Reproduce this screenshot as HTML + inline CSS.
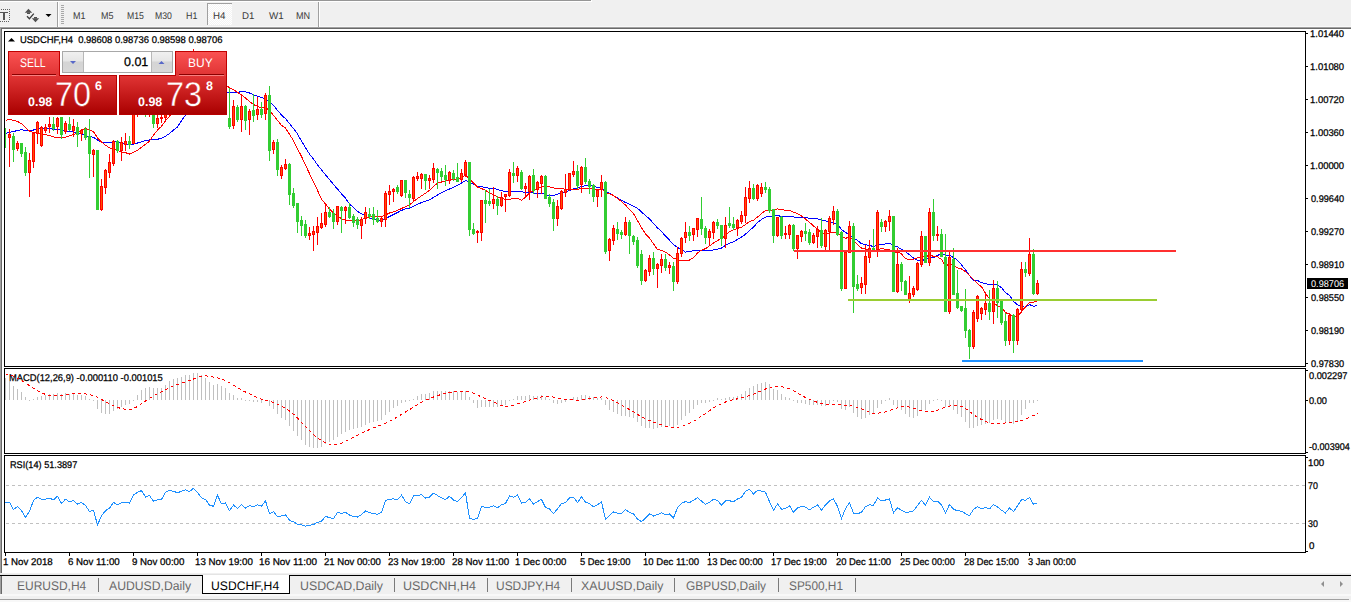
<!DOCTYPE html><html><head><meta charset="utf-8"><style>
html,body{margin:0;padding:0;}body{width:1351px;height:602px;overflow:hidden;background:#f0f0f0;position:relative;}
svg{position:absolute;left:0;top:0;}text{font-family:"Liberation Sans",sans-serif;}
</style></head><body>
<svg width="1351" height="602" viewBox="0 0 1351 602">
<defs>
<linearGradient id="gtab" gradientUnits="userSpaceOnUse" x1="0" y1="52" x2="0" y2="75"><stop offset="0" stop-color="#fa5252"/><stop offset="1" stop-color="#e03434"/></linearGradient>
<linearGradient id="gbig" gradientUnits="userSpaceOnUse" x1="0" y1="76" x2="0" y2="114"><stop offset="0" stop-color="#e03434"/><stop offset="1" stop-color="#aa0000"/></linearGradient>
<linearGradient id="gbigu" gradientUnits="userSpaceOnUse" x1="0" y1="76" x2="0" y2="114"><stop offset="0" stop-color="#e03434"/><stop offset="1" stop-color="#aa0000"/></linearGradient>
<linearGradient id="gbtn" gradientUnits="objectBoundingBox" x1="0" y1="0" x2="0" y2="1"><stop offset="0" stop-color="#f0f0f0"/><stop offset="0.45" stop-color="#e6e6e6"/><stop offset="0.5" stop-color="#d4d4d4"/><stop offset="1" stop-color="#d8d8d8"/></linearGradient>
<pattern id="dots" width="2" height="2" patternUnits="userSpaceOnUse"><rect width="2" height="2" fill="#f4f4f4"/><rect width="1" height="1" fill="#ffffff"/><rect x="1" y="1" width="1" height="1" fill="#ffffff"/></pattern>
<clipPath id="cm"><rect x="5" y="32" width="1300" height="334"/></clipPath>
<clipPath id="cmacd"><rect x="5" y="369" width="1300" height="84"/></clipPath>
<clipPath id="crsi"><rect x="5" y="456" width="1300" height="96"/></clipPath>
</defs>
<g shape-rendering="crispEdges">
<rect x="0" y="0" width="1351" height="602" fill="#f0f0f0"/>
<rect x="0" y="0" width="591" height="1" fill="#969696"/><rect x="0" y="1" width="592" height="1" fill="#ffffff"/><rect x="591" y="0" width="1" height="2" fill="#ffffff"/>
<rect x="0" y="26" width="1351" height="1" fill="#f8f8f8"/><rect x="0" y="27" width="1351" height="1" fill="#a0a0a0"/><rect x="0" y="28" width="1351" height="1" fill="#696969"/>
<g fill="#606060">
<rect x="9" y="9" width="1" height="1"/>
<rect x="9" y="11" width="1" height="1"/>
<rect x="9" y="13" width="1" height="1"/>
<rect x="9" y="15" width="1" height="1"/>
<rect x="9" y="17" width="1" height="1"/>
<rect x="9" y="19" width="1" height="1"/>
<rect x="1" y="9" width="1" height="1"/>
<rect x="3" y="9" width="1" height="1"/>
<rect x="5" y="9" width="1" height="1"/>
<rect x="7" y="9" width="1" height="1"/>
<rect x="9" y="9" width="1" height="1"/>
<rect x="0" y="21" width="1" height="1"/>
<rect x="2" y="21" width="1" height="1"/>
<rect x="4" y="21" width="1" height="1"/>
<rect x="6" y="21" width="1" height="1"/>
<rect x="8" y="21" width="1" height="1"/>
</g><g fill="#555555"><rect x="0" y="12" width="8" height="1"/><rect x="3" y="12" width="2" height="8"/></g>
</g>
<path d="M24.8 12.8 L28.5 8.8 L32.2 12.8 Z" fill="#505050"/><rect x="27" y="12.5" width="3" height="1.5" fill="#505050"/><rect x="34" y="17" width="3" height="1.5" fill="#505050"/><path d="M31.8 18.3 L39.2 18.3 L35.5 22.2 Z" fill="#505050"/><path d="M27 16.3 L29.4 18.7 L33.8 13.6" stroke="#3a3a3a" stroke-width="1.3" fill="none"/>
<path d="M45.5 14 L51.5 14 L48.5 17 Z" fill="#000"/>
<g shape-rendering="crispEdges">
<rect x="57" y="2" width="1" height="25" fill="#a0a0a0"/><rect x="58" y="2" width="1" height="25" fill="#ffffff"/>
<rect x="61" y="5" width="3" height="1" fill="#a8a8a8"/>
<rect x="61" y="7" width="3" height="1" fill="#a8a8a8"/>
<rect x="61" y="9" width="3" height="1" fill="#a8a8a8"/>
<rect x="61" y="11" width="3" height="1" fill="#a8a8a8"/>
<rect x="61" y="13" width="3" height="1" fill="#a8a8a8"/>
<rect x="61" y="15" width="3" height="1" fill="#a8a8a8"/>
<rect x="61" y="17" width="3" height="1" fill="#a8a8a8"/>
<rect x="61" y="19" width="3" height="1" fill="#a8a8a8"/>
<rect x="61" y="21" width="3" height="1" fill="#a8a8a8"/>
<rect x="61" y="23" width="3" height="1" fill="#a8a8a8"/>
<rect x="318" y="2" width="1" height="25" fill="#a0a0a0"/><rect x="319" y="2" width="1" height="25" fill="#ffffff"/>
<rect x="207" y="3" width="25" height="22" fill="url(#dots)"/><rect x="207" y="3" width="25" height="1" fill="#a0a0a0"/><rect x="207" y="3" width="1" height="22" fill="#a0a0a0"/>
</g>
<text x="73.00" y="19.00" font-size="9.72" textLength="12.48" lengthAdjust="spacingAndGlyphs" text-rendering="geometricPrecision" fill="#3a3a3a">M1</text>
<text x="101.00" y="19.00" font-size="9.72" textLength="12.48" lengthAdjust="spacingAndGlyphs" text-rendering="geometricPrecision" fill="#3a3a3a">M5</text>
<text x="127.00" y="19.00" font-size="9.72" textLength="16.92" lengthAdjust="spacingAndGlyphs" text-rendering="geometricPrecision" fill="#3a3a3a">M15</text>
<text x="155.00" y="19.00" font-size="9.72" textLength="16.92" lengthAdjust="spacingAndGlyphs" text-rendering="geometricPrecision" fill="#3a3a3a">M30</text>
<text x="186.00" y="19.00" font-size="9.72" textLength="11.40" lengthAdjust="spacingAndGlyphs" text-rendering="geometricPrecision" fill="#3a3a3a">H1</text>
<text x="213.00" y="19.00" font-size="9.72" textLength="12.44" lengthAdjust="spacingAndGlyphs" text-rendering="geometricPrecision" fill="#3a3a3a">H4</text>
<text x="242.00" y="19.00" font-size="9.72" textLength="12.44" lengthAdjust="spacingAndGlyphs" text-rendering="geometricPrecision" fill="#3a3a3a">D1</text>
<text x="269.00" y="19.00" font-size="9.72" textLength="14.73" lengthAdjust="spacingAndGlyphs" text-rendering="geometricPrecision" fill="#3a3a3a">W1</text>
<text x="296.00" y="19.00" font-size="9.72" textLength="14.12" lengthAdjust="spacingAndGlyphs" text-rendering="geometricPrecision" fill="#3a3a3a">MN</text>
<g shape-rendering="crispEdges">
<rect x="0" y="29" width="1351" height="544" fill="#ffffff"/>
<rect x="0" y="27" width="1" height="546" fill="#a0a0a0"/><rect x="1" y="28" width="1" height="545" fill="#696969"/>
<g fill="#000">
<rect x="4" y="31" width="1302" height="1"/><rect x="4" y="366" width="1302" height="1"/><rect x="4" y="31" width="1" height="336"/><rect x="1305" y="31" width="1" height="336"/>
<rect x="4" y="368" width="1302" height="1"/><rect x="4" y="453" width="1302" height="1"/><rect x="4" y="368" width="1" height="86"/><rect x="1305" y="368" width="1" height="86"/>
<rect x="4" y="455" width="1302" height="1"/><rect x="4" y="552" width="1302" height="1"/><rect x="4" y="455" width="1" height="98"/><rect x="1305" y="455" width="1" height="98"/>
<rect x="1306" y="33" width="2" height="1"/>
<rect x="1306" y="66" width="2" height="1"/>
<rect x="1306" y="99" width="2" height="1"/>
<rect x="1306" y="132" width="2" height="1"/>
<rect x="1306" y="165" width="2" height="1"/>
<rect x="1306" y="198" width="2" height="1"/>
<rect x="1306" y="231" width="2" height="1"/>
<rect x="1306" y="264" width="2" height="1"/>
<rect x="1306" y="297" width="2" height="1"/>
<rect x="1306" y="330" width="2" height="1"/>
<rect x="1306" y="363" width="2" height="1"/>
<rect x="1306" y="370" width="2" height="1"/><rect x="1306" y="400" width="2" height="1"/><rect x="1306" y="452" width="2" height="1"/><rect x="1306" y="457" width="2" height="1"/><rect x="1306" y="551" width="2" height="1"/>
<rect x="5" y="553" width="1" height="3"/>
<rect x="69" y="553" width="1" height="3"/>
<rect x="133" y="553" width="1" height="3"/>
<rect x="197" y="553" width="1" height="3"/>
<rect x="261" y="553" width="1" height="3"/>
<rect x="325" y="553" width="1" height="3"/>
<rect x="389" y="553" width="1" height="3"/>
<rect x="453" y="553" width="1" height="3"/>
<rect x="517" y="553" width="1" height="3"/>
<rect x="581" y="553" width="1" height="3"/>
<rect x="645" y="553" width="1" height="3"/>
<rect x="709" y="553" width="1" height="3"/>
<rect x="773" y="553" width="1" height="3"/>
<rect x="837" y="553" width="1" height="3"/>
<rect x="901" y="553" width="1" height="3"/>
<rect x="965" y="553" width="1" height="3"/>
<rect x="1029" y="553" width="1" height="3"/>
</g></g>
<text x="1310.03" y="37.00" font-size="9.72" textLength="34.11" lengthAdjust="spacingAndGlyphs" text-rendering="geometricPrecision" fill="#000" stroke="#000" stroke-width="0.25">1.01440</text>
<text x="1310.03" y="70.00" font-size="9.72" textLength="34.11" lengthAdjust="spacingAndGlyphs" text-rendering="geometricPrecision" fill="#000" stroke="#000" stroke-width="0.25">1.01080</text>
<text x="1310.03" y="103.00" font-size="9.72" textLength="34.11" lengthAdjust="spacingAndGlyphs" text-rendering="geometricPrecision" fill="#000" stroke="#000" stroke-width="0.25">1.00720</text>
<text x="1310.03" y="136.00" font-size="9.72" textLength="34.11" lengthAdjust="spacingAndGlyphs" text-rendering="geometricPrecision" fill="#000" stroke="#000" stroke-width="0.25">1.00360</text>
<text x="1310.03" y="169.00" font-size="9.72" textLength="34.11" lengthAdjust="spacingAndGlyphs" text-rendering="geometricPrecision" fill="#000" stroke="#000" stroke-width="0.25">1.00000</text>
<text x="1311.00" y="202.00" font-size="9.72" textLength="33.13" lengthAdjust="spacingAndGlyphs" text-rendering="geometricPrecision" fill="#000" stroke="#000" stroke-width="0.25">0.99640</text>
<text x="1311.00" y="235.00" font-size="9.72" textLength="33.13" lengthAdjust="spacingAndGlyphs" text-rendering="geometricPrecision" fill="#000" stroke="#000" stroke-width="0.25">0.99270</text>
<text x="1311.00" y="268.00" font-size="9.72" textLength="33.13" lengthAdjust="spacingAndGlyphs" text-rendering="geometricPrecision" fill="#000" stroke="#000" stroke-width="0.25">0.98910</text>
<text x="1311.00" y="301.00" font-size="9.72" textLength="33.13" lengthAdjust="spacingAndGlyphs" text-rendering="geometricPrecision" fill="#000" stroke="#000" stroke-width="0.25">0.98550</text>
<text x="1311.00" y="334.00" font-size="9.72" textLength="33.13" lengthAdjust="spacingAndGlyphs" text-rendering="geometricPrecision" fill="#000" stroke="#000" stroke-width="0.25">0.98190</text>
<text x="1311.00" y="367.00" font-size="9.72" textLength="33.13" lengthAdjust="spacingAndGlyphs" text-rendering="geometricPrecision" fill="#000" stroke="#000" stroke-width="0.25">0.97830</text>
<text x="1309.00" y="379.00" font-size="9.72" textLength="38.52" lengthAdjust="spacingAndGlyphs" text-rendering="geometricPrecision" fill="#000" stroke="#000" stroke-width="0.25">0.002297</text>
<text x="1309.00" y="404.00" font-size="9.72" textLength="17.93" lengthAdjust="spacingAndGlyphs" text-rendering="geometricPrecision" fill="#000" stroke="#000" stroke-width="0.25">0.00</text>
<text x="1309.00" y="450.00" font-size="9.72" textLength="40.80" lengthAdjust="spacingAndGlyphs" text-rendering="geometricPrecision" fill="#000" stroke="#000" stroke-width="0.25">-0.003904</text>
<text x="1308.00" y="466.00" font-size="9.72" textLength="16.22" lengthAdjust="spacingAndGlyphs" text-rendering="geometricPrecision" fill="#000" stroke="#000" stroke-width="0.25">100</text>
<text x="1308.00" y="489.00" font-size="9.72" textLength="9.83" lengthAdjust="spacingAndGlyphs" text-rendering="geometricPrecision" fill="#000" stroke="#000" stroke-width="0.25">70</text>
<text x="1308.00" y="527.00" font-size="9.72" textLength="9.83" lengthAdjust="spacingAndGlyphs" text-rendering="geometricPrecision" fill="#000" stroke="#000" stroke-width="0.25">30</text>
<text x="1309.00" y="549.00" font-size="9.72" textLength="5.41" lengthAdjust="spacingAndGlyphs" text-rendering="geometricPrecision" fill="#000" stroke="#000" stroke-width="0.25">0</text>
<text x="3.00" y="565.00" font-size="9.72" textLength="49.72" lengthAdjust="spacingAndGlyphs" text-rendering="geometricPrecision" fill="#000" stroke="#000" stroke-width="0.25">1 Nov 2018</text>
<text x="68.00" y="565.00" font-size="9.72" textLength="51.70" lengthAdjust="spacingAndGlyphs" text-rendering="geometricPrecision" fill="#000" stroke="#000" stroke-width="0.25">6 Nov 11:00</text>
<text x="132.00" y="565.00" font-size="9.72" textLength="52.42" lengthAdjust="spacingAndGlyphs" text-rendering="geometricPrecision" fill="#000" stroke="#000" stroke-width="0.25">9 Nov 00:00</text>
<text x="195.00" y="565.00" font-size="9.72" textLength="57.83" lengthAdjust="spacingAndGlyphs" text-rendering="geometricPrecision" fill="#000" stroke="#000" stroke-width="0.25">13 Nov 19:00</text>
<text x="258.98" y="565.00" font-size="9.72" textLength="58.11" lengthAdjust="spacingAndGlyphs" text-rendering="geometricPrecision" fill="#000" stroke="#000" stroke-width="0.25">16 Nov 11:00</text>
<text x="324.00" y="565.00" font-size="9.72" textLength="56.83" lengthAdjust="spacingAndGlyphs" text-rendering="geometricPrecision" fill="#000" stroke="#000" stroke-width="0.25">21 Nov 00:00</text>
<text x="388.00" y="565.00" font-size="9.72" textLength="56.83" lengthAdjust="spacingAndGlyphs" text-rendering="geometricPrecision" fill="#000" stroke="#000" stroke-width="0.25">23 Nov 19:00</text>
<text x="452.00" y="565.00" font-size="9.72" textLength="57.09" lengthAdjust="spacingAndGlyphs" text-rendering="geometricPrecision" fill="#000" stroke="#000" stroke-width="0.25">28 Nov 11:00</text>
<text x="515.02" y="565.00" font-size="9.72" textLength="51.39" lengthAdjust="spacingAndGlyphs" text-rendering="geometricPrecision" fill="#000" stroke="#000" stroke-width="0.25">1 Dec 00:00</text>
<text x="580.00" y="565.00" font-size="9.72" textLength="50.41" lengthAdjust="spacingAndGlyphs" text-rendering="geometricPrecision" fill="#000" stroke="#000" stroke-width="0.25">5 Dec 19:00</text>
<text x="643.02" y="565.00" font-size="9.72" textLength="56.07" lengthAdjust="spacingAndGlyphs" text-rendering="geometricPrecision" fill="#000" stroke="#000" stroke-width="0.25">10 Dec 11:00</text>
<text x="707.04" y="565.00" font-size="9.72" textLength="55.80" lengthAdjust="spacingAndGlyphs" text-rendering="geometricPrecision" fill="#000" stroke="#000" stroke-width="0.25">13 Dec 00:00</text>
<text x="771.04" y="565.00" font-size="9.72" textLength="55.80" lengthAdjust="spacingAndGlyphs" text-rendering="geometricPrecision" fill="#000" stroke="#000" stroke-width="0.25">17 Dec 19:00</text>
<text x="836.00" y="565.00" font-size="9.72" textLength="55.09" lengthAdjust="spacingAndGlyphs" text-rendering="geometricPrecision" fill="#000" stroke="#000" stroke-width="0.25">20 Dec 11:00</text>
<text x="900.00" y="565.00" font-size="9.72" textLength="54.84" lengthAdjust="spacingAndGlyphs" text-rendering="geometricPrecision" fill="#000" stroke="#000" stroke-width="0.25">25 Dec 00:00</text>
<text x="964.00" y="565.00" font-size="9.72" textLength="54.84" lengthAdjust="spacingAndGlyphs" text-rendering="geometricPrecision" fill="#000" stroke="#000" stroke-width="0.25">28 Dec 15:00</text>
<text x="1028.00" y="565.00" font-size="9.72" textLength="47.81" lengthAdjust="spacingAndGlyphs" text-rendering="geometricPrecision" fill="#000" stroke="#000" stroke-width="0.25">3 Jan 00:00</text>
<g clip-path="url(#cm)">
<polyline points="5.5,133.4 9.5,132.4 13.5,131.6 17.5,130.4 21.5,129.8 25.5,130.4 29.5,130.8 33.5,130.0 37.5,129.0 41.5,128.5 45.5,128.5 49.5,128.7 53.5,129.2 57.5,129.4 61.5,130.5 65.5,131.0 69.5,131.7 73.5,132.0 77.5,132.9 81.5,134.0 85.5,135.6 89.5,136.5 93.5,137.3 97.5,140.1 101.5,142.2 105.5,143.0 109.5,142.5 113.5,141.6 117.5,142.4 121.5,143.4 125.5,144.0 129.5,144.8 133.5,144.3 137.5,143.0 141.5,141.8 145.5,140.7 149.5,139.9 153.5,139.6 157.5,139.2 161.5,138.4 165.5,136.3 169.5,133.5 173.5,130.0 177.5,126.9 181.5,120.6 185.5,115.2 189.5,110.7 193.5,105.9 197.5,102.6 201.5,99.5 205.5,97.0 209.5,95.3 213.5,93.6 217.5,91.7 221.5,91.6 225.5,91.7 229.5,92.4 233.5,92.5 237.5,92.3 241.5,91.7 245.5,91.9 249.5,93.0 253.5,94.8 257.5,96.2 261.5,97.6 265.5,98.5 269.5,102.2 273.5,105.3 277.5,110.4 281.5,115.0 285.5,118.7 289.5,123.7 293.5,128.5 297.5,133.9 301.5,141.2 305.5,147.6 309.5,154.1 313.5,159.1 317.5,164.8 321.5,169.8 325.5,174.8 329.5,179.4 333.5,184.6 337.5,189.0 341.5,193.8 345.5,198.2 349.5,204.0 353.5,207.5 357.5,211.4 361.5,213.7 365.5,215.9 369.5,218.4 373.5,219.5 377.5,220.3 381.5,220.2 385.5,218.6 389.5,216.5 393.5,214.5 397.5,212.5 401.5,210.4 405.5,208.9 409.5,208.2 413.5,206.3 417.5,204.2 421.5,202.6 425.5,201.2 429.5,199.8 433.5,197.5 437.5,195.1 441.5,192.8 445.5,190.9 449.5,189.0 453.5,187.2 457.5,185.4 461.5,183.1 465.5,180.5 469.5,182.2 473.5,184.2 477.5,186.2 481.5,186.6 485.5,187.7 489.5,188.2 493.5,188.3 497.5,189.6 501.5,190.6 505.5,191.6 509.5,191.2 513.5,191.1 517.5,191.1 521.5,191.8 525.5,192.3 529.5,192.2 533.5,193.0 537.5,193.2 541.5,193.0 545.5,194.2 549.5,196.1 553.5,195.6 557.5,194.3 561.5,192.4 565.5,191.9 569.5,190.5 573.5,188.9 577.5,188.3 581.5,186.5 585.5,185.7 589.5,185.3 593.5,186.5 597.5,187.2 601.5,187.8 605.5,190.8 609.5,193.4 613.5,195.8 617.5,197.9 621.5,200.4 625.5,202.5 629.5,204.3 633.5,206.1 637.5,208.4 641.5,211.9 645.5,215.6 649.5,218.9 653.5,223.5 657.5,227.9 661.5,231.4 665.5,236.2 669.5,240.2 673.5,244.7 677.5,247.4 681.5,249.7 685.5,252.1 689.5,251.3 693.5,250.8 697.5,250.3 701.5,250.1 705.5,250.2 709.5,250.6 713.5,250.0 717.5,249.3 721.5,248.0 725.5,245.4 729.5,243.2 733.5,241.7 737.5,239.5 741.5,237.1 745.5,234.2 749.5,230.4 753.5,227.2 757.5,222.6 761.5,219.5 765.5,217.2 769.5,216.1 773.5,216.1 777.5,215.6 781.5,216.4 785.5,216.6 789.5,216.1 793.5,216.9 797.5,217.5 801.5,217.8 805.5,217.5 809.5,218.4 813.5,218.8 817.5,218.9 821.5,220.1 825.5,220.8 829.5,221.8 833.5,222.9 837.5,224.6 841.5,229.5 845.5,232.6 849.5,234.4 853.5,238.0 857.5,240.5 861.5,243.7 865.5,244.7 869.5,245.4 873.5,246.6 877.5,244.9 881.5,244.5 885.5,244.0 889.5,243.2 893.5,245.5 897.5,246.9 901.5,249.4 905.5,251.7 909.5,254.7 913.5,258.0 917.5,260.5 921.5,260.6 925.5,259.4 929.5,257.5 933.5,257.9 937.5,255.4 941.5,253.9 945.5,255.2 949.5,255.3 953.5,257.5 957.5,260.2 961.5,264.8 965.5,269.8 969.5,275.7 973.5,280.3 977.5,280.5 981.5,282.6 985.5,283.7 989.5,284.5 993.5,284.3 997.5,284.9 1001.5,287.7 1005.5,292.7 1009.5,295.2 1013.5,301.3 1017.5,304.8 1021.5,306.5 1025.5,307.3 1029.5,304.5 1033.5,306.3 1037.5,305.7" fill="none" stroke="#0000ff" stroke-width="1" shape-rendering="crispEdges"/>
<polyline points="5.5,120.2 9.5,119.5 13.5,120.4 17.5,121.5 21.5,123.8 25.5,127.8 29.5,131.1 33.5,132.7 37.5,133.3 41.5,134.2 45.5,134.8 49.5,135.5 53.5,136.9 57.5,138.0 61.5,137.9 65.5,137.1 69.5,135.7 73.5,134.5 77.5,133.1 81.5,130.1 85.5,128.5 89.5,129.9 93.5,131.9 97.5,137.8 101.5,142.0 105.5,145.3 109.5,147.7 113.5,149.4 117.5,150.5 121.5,151.9 125.5,152.7 129.5,154.0 133.5,152.4 137.5,150.4 141.5,147.2 145.5,144.3 149.5,141.1 153.5,135.0 157.5,130.1 161.5,126.3 165.5,120.9 169.5,116.3 173.5,111.3 177.5,107.2 181.5,102.7 185.5,97.5 189.5,94.9 193.5,92.2 197.5,90.6 201.5,88.7 205.5,87.6 209.5,86.2 213.5,85.6 217.5,82.3 221.5,83.3 225.5,84.6 229.5,87.9 233.5,89.5 237.5,92.4 241.5,94.9 245.5,98.0 249.5,101.5 253.5,104.6 257.5,106.3 261.5,108.1 265.5,107.4 269.5,110.4 273.5,115.4 277.5,120.4 281.5,125.4 285.5,128.1 289.5,134.4 293.5,140.6 297.5,148.8 301.5,156.3 305.5,165.1 309.5,173.6 313.5,182.3 317.5,190.3 321.5,199.4 325.5,203.9 329.5,209.1 333.5,212.9 337.5,215.6 341.5,218.9 345.5,219.9 349.5,220.7 353.5,220.8 357.5,220.7 361.5,219.6 365.5,218.1 369.5,217.0 373.5,216.5 377.5,216.4 381.5,216.8 385.5,215.1 389.5,213.0 393.5,211.8 397.5,210.4 401.5,208.5 405.5,206.7 409.5,204.9 413.5,201.6 417.5,198.5 421.5,195.8 425.5,193.2 429.5,190.3 433.5,186.5 437.5,183.2 441.5,182.0 445.5,181.1 449.5,179.9 453.5,179.0 457.5,179.1 461.5,177.7 465.5,175.2 469.5,178.9 473.5,183.0 477.5,187.1 481.5,188.5 485.5,190.3 489.5,192.8 493.5,194.7 497.5,196.8 501.5,198.1 505.5,199.6 509.5,199.2 513.5,198.8 517.5,198.4 521.5,200.3 525.5,197.2 529.5,193.1 533.5,190.2 537.5,188.9 541.5,187.0 545.5,186.6 549.5,186.9 553.5,187.9 557.5,188.5 561.5,188.3 565.5,189.5 569.5,189.4 573.5,189.6 577.5,189.4 581.5,188.0 585.5,188.4 589.5,188.1 593.5,189.1 597.5,190.1 601.5,188.9 605.5,192.4 609.5,193.9 613.5,195.4 617.5,198.4 621.5,201.6 625.5,205.1 629.5,209.7 633.5,213.7 637.5,220.7 641.5,227.8 645.5,233.8 649.5,238.2 653.5,243.8 657.5,249.6 661.5,250.2 665.5,252.2 669.5,254.9 673.5,258.3 677.5,259.6 681.5,260.8 685.5,260.6 689.5,260.1 693.5,257.5 697.5,253.1 701.5,250.1 705.5,248.6 709.5,245.9 713.5,242.9 717.5,240.5 721.5,238.4 725.5,235.6 729.5,231.6 733.5,229.7 737.5,228.4 741.5,227.2 745.5,224.5 749.5,221.6 753.5,220.2 757.5,217.1 761.5,213.6 765.5,210.6 769.5,209.7 773.5,210.4 777.5,208.9 781.5,209.6 785.5,210.2 789.5,210.1 793.5,212.1 797.5,213.5 801.5,215.9 805.5,219.1 809.5,222.3 813.5,225.9 817.5,228.9 821.5,232.9 825.5,234.3 829.5,233.1 833.5,232.6 837.5,232.6 841.5,236.5 845.5,238.4 849.5,236.9 853.5,240.5 857.5,244.6 861.5,248.1 865.5,249.1 869.5,250.1 873.5,251.6 877.5,249.2 881.5,248.9 885.5,249.1 889.5,249.5 893.5,253.6 897.5,251.9 901.5,253.9 905.5,258.8 909.5,259.3 913.5,259.3 917.5,257.9 921.5,256.4 925.5,257.4 929.5,254.7 933.5,256.4 937.5,256.9 941.5,259.4 945.5,266.2 949.5,263.8 953.5,265.9 957.5,267.8 961.5,268.9 965.5,271.6 969.5,275.7 973.5,279.2 977.5,283.5 981.5,286.8 985.5,293.3 989.5,298.7 993.5,302.6 997.5,305.9 1001.5,306.6 1005.5,312.6 1009.5,314.1 1013.5,316.4 1017.5,316.4 1021.5,312.0 1025.5,306.7 1029.5,302.6 1033.5,302.4 1037.5,300.6" fill="none" stroke="#ff0000" stroke-width="1" shape-rendering="crispEdges"/>
</g>
<g clip-path="url(#cm)" shape-rendering="crispEdges">
<rect x="5" y="128" width="1" height="20" fill="#32cd32"/>
<rect x="9" y="129" width="1" height="38" fill="#ff0000"/><rect x="8" y="134" width="3" height="4" fill="#ff0000"/>
<rect x="9" y="135" width="1" height="2" fill="#ff5000"/>
<rect x="13" y="133" width="1" height="29" fill="#32cd32"/><rect x="12" y="136" width="3" height="14" fill="#32cd32"/>
<rect x="17" y="141" width="1" height="10" fill="#ff0000"/><rect x="16" y="143" width="3" height="6" fill="#ff0000"/>
<rect x="17" y="144" width="1" height="4" fill="#ff5000"/>
<rect x="21" y="143" width="1" height="14" fill="#32cd32"/><rect x="20" y="143" width="3" height="11" fill="#32cd32"/>
<rect x="25" y="147" width="1" height="29" fill="#32cd32"/><rect x="24" y="152" width="3" height="21" fill="#32cd32"/>
<rect x="29" y="153" width="1" height="44" fill="#ff0000"/><rect x="28" y="160" width="3" height="13" fill="#ff0000"/>
<rect x="29" y="161" width="1" height="11" fill="#ff5000"/>
<rect x="33" y="132" width="1" height="36" fill="#ff0000"/><rect x="32" y="133" width="3" height="29" fill="#ff0000"/>
<rect x="33" y="134" width="1" height="27" fill="#ff5000"/>
<rect x="37" y="121" width="1" height="23" fill="#ff0000"/><rect x="36" y="122" width="3" height="12" fill="#ff0000"/>
<rect x="37" y="123" width="1" height="10" fill="#ff5000"/>
<rect x="41" y="126" width="1" height="21" fill="#ff0000"/><rect x="40" y="127" width="3" height="19" fill="#ff0000"/>
<rect x="41" y="128" width="1" height="17" fill="#ff5000"/>
<rect x="45" y="124" width="1" height="9" fill="#ff0000"/><rect x="44" y="127" width="3" height="4" fill="#ff0000"/>
<rect x="45" y="128" width="1" height="2" fill="#ff5000"/>
<rect x="49" y="117" width="1" height="16" fill="#ff0000"/><rect x="48" y="124" width="3" height="3" fill="#ff0000"/>
<rect x="49" y="125" width="1" height="1" fill="#ff5000"/>
<rect x="53" y="117" width="1" height="14" fill="#32cd32"/><rect x="52" y="124" width="3" height="5" fill="#32cd32"/>
<rect x="57" y="117" width="1" height="17" fill="#ff0000"/><rect x="56" y="118" width="3" height="9" fill="#ff0000"/>
<rect x="57" y="119" width="1" height="7" fill="#ff5000"/>
<rect x="61" y="117" width="1" height="22" fill="#32cd32"/><rect x="60" y="117" width="3" height="18" fill="#32cd32"/>
<rect x="65" y="121" width="1" height="13" fill="#ff0000"/><rect x="64" y="123" width="3" height="9" fill="#ff0000"/>
<rect x="65" y="124" width="1" height="7" fill="#ff5000"/>
<rect x="69" y="117" width="1" height="14" fill="#32cd32"/><rect x="68" y="124" width="3" height="6" fill="#32cd32"/>
<rect x="73" y="119" width="1" height="18" fill="#ff0000"/><rect x="72" y="126" width="3" height="5" fill="#ff0000"/>
<rect x="73" y="127" width="1" height="3" fill="#ff5000"/>
<rect x="77" y="122" width="1" height="25" fill="#32cd32"/><rect x="76" y="127" width="3" height="8" fill="#32cd32"/>
<rect x="81" y="129" width="1" height="12" fill="#ff0000"/><rect x="80" y="130" width="3" height="4" fill="#ff0000"/>
<rect x="81" y="131" width="1" height="2" fill="#ff5000"/>
<rect x="85" y="127" width="1" height="13" fill="#32cd32"/><rect x="84" y="129" width="3" height="9" fill="#32cd32"/>
<rect x="89" y="119" width="1" height="59" fill="#32cd32"/><rect x="88" y="136" width="3" height="18" fill="#32cd32"/>
<rect x="93" y="149" width="1" height="28" fill="#ff0000"/><rect x="92" y="150" width="3" height="5" fill="#ff0000"/>
<rect x="93" y="151" width="1" height="3" fill="#ff5000"/>
<rect x="97" y="150" width="1" height="60" fill="#32cd32"/><rect x="96" y="150" width="3" height="60" fill="#32cd32"/>
<rect x="101" y="179" width="1" height="32" fill="#ff0000"/><rect x="100" y="186" width="3" height="24" fill="#ff0000"/>
<rect x="101" y="187" width="1" height="22" fill="#ff5000"/>
<rect x="105" y="169" width="1" height="25" fill="#ff0000"/><rect x="104" y="170" width="3" height="18" fill="#ff0000"/>
<rect x="105" y="171" width="1" height="16" fill="#ff5000"/>
<rect x="109" y="154" width="1" height="24" fill="#ff0000"/><rect x="108" y="162" width="3" height="11" fill="#ff0000"/>
<rect x="109" y="163" width="1" height="9" fill="#ff5000"/>
<rect x="113" y="140" width="1" height="26" fill="#ff0000"/><rect x="112" y="141" width="3" height="23" fill="#ff0000"/>
<rect x="113" y="142" width="1" height="21" fill="#ff5000"/>
<rect x="117" y="140" width="1" height="13" fill="#32cd32"/><rect x="116" y="141" width="3" height="10" fill="#32cd32"/>
<rect x="121" y="137" width="1" height="24" fill="#ff0000"/><rect x="120" y="142" width="3" height="9" fill="#ff0000"/>
<rect x="121" y="143" width="1" height="7" fill="#ff5000"/>
<rect x="125" y="133" width="1" height="18" fill="#ff0000"/><rect x="124" y="141" width="3" height="4" fill="#ff0000"/>
<rect x="125" y="142" width="1" height="2" fill="#ff5000"/>
<rect x="129" y="136" width="1" height="13" fill="#32cd32"/><rect x="128" y="141" width="3" height="4" fill="#32cd32"/>
<rect x="133" y="108" width="1" height="36" fill="#ff0000"/><rect x="132" y="112" width="3" height="32" fill="#ff0000"/>
<rect x="133" y="113" width="1" height="30" fill="#ff5000"/>
<rect x="137" y="97" width="1" height="20" fill="#ff0000"/><rect x="136" y="101" width="3" height="12" fill="#ff0000"/>
<rect x="137" y="102" width="1" height="10" fill="#ff5000"/>
<rect x="141" y="89" width="1" height="17" fill="#ff0000"/><rect x="140" y="93" width="3" height="9" fill="#ff0000"/>
<rect x="141" y="94" width="1" height="7" fill="#ff5000"/>
<rect x="145" y="89" width="1" height="28" fill="#32cd32"/><rect x="144" y="93" width="3" height="20" fill="#32cd32"/>
<rect x="149" y="101" width="1" height="16" fill="#ff0000"/><rect x="148" y="105" width="3" height="8" fill="#ff0000"/>
<rect x="149" y="106" width="1" height="6" fill="#ff5000"/>
<rect x="153" y="101" width="1" height="27" fill="#32cd32"/><rect x="152" y="105" width="3" height="19" fill="#32cd32"/>
<rect x="157" y="114" width="1" height="14" fill="#ff0000"/><rect x="156" y="118" width="3" height="6" fill="#ff0000"/>
<rect x="157" y="119" width="1" height="4" fill="#ff5000"/>
<rect x="161" y="113" width="1" height="10" fill="#ff0000"/><rect x="160" y="117" width="3" height="2" fill="#ff0000"/>
<rect x="165" y="83" width="1" height="39" fill="#ff0000"/><rect x="164" y="87" width="3" height="31" fill="#ff0000"/>
<rect x="165" y="88" width="1" height="29" fill="#ff5000"/>
<rect x="169" y="73" width="1" height="19" fill="#ff0000"/><rect x="168" y="77" width="3" height="11" fill="#ff0000"/>
<rect x="169" y="78" width="1" height="9" fill="#ff5000"/>
<rect x="173" y="73" width="1" height="12" fill="#32cd32"/><rect x="172" y="77" width="3" height="4" fill="#32cd32"/>
<rect x="177" y="76" width="1" height="13" fill="#32cd32"/><rect x="176" y="80" width="3" height="5" fill="#32cd32"/>
<rect x="181" y="74" width="1" height="15" fill="#ff0000"/><rect x="180" y="78" width="3" height="7" fill="#ff0000"/>
<rect x="181" y="79" width="1" height="5" fill="#ff5000"/>
<rect x="185" y="68" width="1" height="15" fill="#ff0000"/><rect x="184" y="72" width="3" height="7" fill="#ff0000"/>
<rect x="185" y="73" width="1" height="5" fill="#ff5000"/>
<rect x="189" y="68" width="1" height="13" fill="#32cd32"/><rect x="188" y="72" width="3" height="5" fill="#32cd32"/>
<rect x="193" y="49" width="1" height="27" fill="#ff0000"/><rect x="192" y="56" width="3" height="15" fill="#ff0000"/>
<rect x="193" y="57" width="1" height="13" fill="#ff5000"/>
<rect x="197" y="58" width="1" height="18" fill="#32cd32"/><rect x="196" y="62" width="3" height="10" fill="#32cd32"/>
<rect x="201" y="67" width="1" height="23" fill="#32cd32"/><rect x="200" y="71" width="3" height="15" fill="#32cd32"/>
<rect x="205" y="81" width="1" height="13" fill="#32cd32"/><rect x="204" y="85" width="3" height="5" fill="#32cd32"/>
<rect x="209" y="85" width="1" height="25" fill="#32cd32"/><rect x="208" y="89" width="3" height="17" fill="#32cd32"/>
<rect x="213" y="101" width="1" height="12" fill="#32cd32"/><rect x="212" y="105" width="3" height="4" fill="#32cd32"/>
<rect x="217" y="67" width="1" height="46" fill="#ff0000"/><rect x="216" y="71" width="3" height="38" fill="#ff0000"/>
<rect x="217" y="72" width="1" height="36" fill="#ff5000"/>
<rect x="221" y="67" width="1" height="38" fill="#32cd32"/><rect x="220" y="71" width="3" height="30" fill="#32cd32"/>
<rect x="225" y="92" width="1" height="13" fill="#ff0000"/><rect x="224" y="96" width="3" height="5" fill="#ff0000"/>
<rect x="225" y="97" width="1" height="3" fill="#ff5000"/>
<rect x="229" y="88" width="1" height="41" fill="#32cd32"/><rect x="228" y="118" width="3" height="9" fill="#32cd32"/>
<rect x="233" y="100" width="1" height="29" fill="#ff0000"/><rect x="232" y="106" width="3" height="20" fill="#ff0000"/>
<rect x="233" y="107" width="1" height="18" fill="#ff5000"/>
<rect x="237" y="105" width="1" height="17" fill="#32cd32"/><rect x="236" y="107" width="3" height="13" fill="#32cd32"/>
<rect x="241" y="95" width="1" height="37" fill="#ff0000"/><rect x="240" y="106" width="3" height="14" fill="#ff0000"/>
<rect x="241" y="107" width="1" height="12" fill="#ff5000"/>
<rect x="245" y="105" width="1" height="25" fill="#32cd32"/><rect x="244" y="106" width="3" height="15" fill="#32cd32"/>
<rect x="249" y="109" width="1" height="26" fill="#ff0000"/><rect x="248" y="111" width="3" height="9" fill="#ff0000"/>
<rect x="249" y="112" width="1" height="7" fill="#ff5000"/>
<rect x="253" y="94" width="1" height="28" fill="#32cd32"/><rect x="252" y="110" width="3" height="6" fill="#32cd32"/>
<rect x="257" y="97" width="1" height="23" fill="#ff0000"/><rect x="256" y="109" width="3" height="6" fill="#ff0000"/>
<rect x="257" y="110" width="1" height="4" fill="#ff5000"/>
<rect x="261" y="102" width="1" height="16" fill="#32cd32"/><rect x="260" y="109" width="3" height="6" fill="#32cd32"/>
<rect x="265" y="93" width="1" height="27" fill="#ff0000"/><rect x="264" y="95" width="3" height="19" fill="#ff0000"/>
<rect x="265" y="96" width="1" height="17" fill="#ff5000"/>
<rect x="269" y="86" width="1" height="75" fill="#32cd32"/><rect x="268" y="95" width="3" height="56" fill="#32cd32"/>
<rect x="273" y="140" width="1" height="14" fill="#ff0000"/><rect x="272" y="142" width="3" height="8" fill="#ff0000"/>
<rect x="273" y="143" width="1" height="6" fill="#ff5000"/>
<rect x="277" y="139" width="1" height="37" fill="#32cd32"/><rect x="276" y="142" width="3" height="28" fill="#32cd32"/>
<rect x="281" y="165" width="1" height="14" fill="#ff0000"/><rect x="280" y="167" width="3" height="9" fill="#ff0000"/>
<rect x="281" y="168" width="1" height="7" fill="#ff5000"/>
<rect x="285" y="159" width="1" height="11" fill="#ff0000"/><rect x="284" y="164" width="3" height="5" fill="#ff0000"/>
<rect x="285" y="165" width="1" height="3" fill="#ff5000"/>
<rect x="289" y="163" width="1" height="42" fill="#32cd32"/><rect x="288" y="164" width="3" height="31" fill="#32cd32"/>
<rect x="293" y="188" width="1" height="20" fill="#32cd32"/><rect x="292" y="193" width="3" height="13" fill="#32cd32"/>
<rect x="297" y="203" width="1" height="30" fill="#32cd32"/><rect x="296" y="203" width="3" height="19" fill="#32cd32"/>
<rect x="301" y="216" width="1" height="20" fill="#32cd32"/><rect x="300" y="220" width="3" height="6" fill="#32cd32"/>
<rect x="305" y="220" width="1" height="18" fill="#32cd32"/><rect x="304" y="224" width="3" height="12" fill="#32cd32"/>
<rect x="309" y="227" width="1" height="13" fill="#ff0000"/><rect x="308" y="233" width="3" height="3" fill="#ff0000"/>
<rect x="309" y="234" width="1" height="1" fill="#ff5000"/>
<rect x="313" y="226" width="1" height="25" fill="#ff0000"/><rect x="312" y="231" width="3" height="4" fill="#ff0000"/>
<rect x="313" y="232" width="1" height="2" fill="#ff5000"/>
<rect x="317" y="217" width="1" height="28" fill="#ff0000"/><rect x="316" y="226" width="3" height="7" fill="#ff0000"/>
<rect x="317" y="227" width="1" height="5" fill="#ff5000"/>
<rect x="321" y="213" width="1" height="16" fill="#ff0000"/><rect x="320" y="223" width="3" height="5" fill="#ff0000"/>
<rect x="321" y="224" width="1" height="3" fill="#ff5000"/>
<rect x="325" y="204" width="1" height="23" fill="#ff0000"/><rect x="324" y="212" width="3" height="13" fill="#ff0000"/>
<rect x="325" y="213" width="1" height="11" fill="#ff5000"/>
<rect x="329" y="207" width="1" height="11" fill="#32cd32"/><rect x="328" y="212" width="3" height="5" fill="#32cd32"/>
<rect x="333" y="209" width="1" height="20" fill="#32cd32"/><rect x="332" y="213" width="3" height="9" fill="#32cd32"/>
<rect x="337" y="206" width="1" height="19" fill="#ff0000"/><rect x="336" y="206" width="3" height="16" fill="#ff0000"/>
<rect x="337" y="207" width="1" height="14" fill="#ff5000"/>
<rect x="341" y="206" width="1" height="27" fill="#32cd32"/><rect x="340" y="207" width="3" height="4" fill="#32cd32"/>
<rect x="345" y="206" width="1" height="18" fill="#ff0000"/><rect x="344" y="207" width="3" height="4" fill="#ff0000"/>
<rect x="345" y="208" width="1" height="2" fill="#ff5000"/>
<rect x="349" y="203" width="1" height="16" fill="#32cd32"/><rect x="348" y="207" width="3" height="11" fill="#32cd32"/>
<rect x="353" y="214" width="1" height="13" fill="#32cd32"/><rect x="352" y="216" width="3" height="7" fill="#32cd32"/>
<rect x="357" y="217" width="1" height="12" fill="#32cd32"/><rect x="356" y="219" width="3" height="6" fill="#32cd32"/>
<rect x="361" y="217" width="1" height="22" fill="#ff0000"/><rect x="360" y="219" width="3" height="7" fill="#ff0000"/>
<rect x="361" y="220" width="1" height="5" fill="#ff5000"/>
<rect x="365" y="207" width="1" height="17" fill="#ff0000"/><rect x="364" y="212" width="3" height="7" fill="#ff0000"/>
<rect x="365" y="213" width="1" height="5" fill="#ff5000"/>
<rect x="369" y="208" width="1" height="11" fill="#32cd32"/><rect x="368" y="214" width="3" height="3" fill="#32cd32"/>
<rect x="373" y="207" width="1" height="18" fill="#32cd32"/><rect x="372" y="214" width="3" height="6" fill="#32cd32"/>
<rect x="377" y="210" width="1" height="13" fill="#32cd32"/><rect x="376" y="218" width="3" height="4" fill="#32cd32"/>
<rect x="381" y="216" width="1" height="11" fill="#ff0000"/><rect x="380" y="218" width="3" height="4" fill="#ff0000"/>
<rect x="381" y="219" width="1" height="2" fill="#ff5000"/>
<rect x="385" y="191" width="1" height="36" fill="#ff0000"/><rect x="384" y="193" width="3" height="27" fill="#ff0000"/>
<rect x="385" y="194" width="1" height="25" fill="#ff5000"/>
<rect x="389" y="185" width="1" height="20" fill="#ff0000"/><rect x="388" y="191" width="3" height="4" fill="#ff0000"/>
<rect x="389" y="192" width="1" height="2" fill="#ff5000"/>
<rect x="393" y="188" width="1" height="14" fill="#ff0000"/><rect x="392" y="189" width="3" height="3" fill="#ff0000"/>
<rect x="393" y="190" width="1" height="1" fill="#ff5000"/>
<rect x="397" y="185" width="1" height="9" fill="#32cd32"/><rect x="396" y="187" width="3" height="5" fill="#32cd32"/>
<rect x="401" y="180" width="1" height="17" fill="#ff0000"/><rect x="400" y="180" width="3" height="16" fill="#ff0000"/>
<rect x="401" y="181" width="1" height="14" fill="#ff5000"/>
<rect x="405" y="180" width="1" height="18" fill="#32cd32"/><rect x="404" y="180" width="3" height="13" fill="#32cd32"/>
<rect x="409" y="190" width="1" height="18" fill="#32cd32"/><rect x="408" y="194" width="3" height="4" fill="#32cd32"/>
<rect x="413" y="176" width="1" height="25" fill="#ff0000"/><rect x="412" y="177" width="3" height="22" fill="#ff0000"/>
<rect x="413" y="178" width="1" height="20" fill="#ff5000"/>
<rect x="417" y="172" width="1" height="9" fill="#ff0000"/><rect x="416" y="176" width="3" height="3" fill="#ff0000"/>
<rect x="417" y="177" width="1" height="1" fill="#ff5000"/>
<rect x="421" y="173" width="1" height="16" fill="#ff0000"/><rect x="420" y="174" width="3" height="5" fill="#ff0000"/>
<rect x="421" y="175" width="1" height="3" fill="#ff5000"/>
<rect x="425" y="174" width="1" height="16" fill="#32cd32"/><rect x="424" y="174" width="3" height="7" fill="#32cd32"/>
<rect x="429" y="175" width="1" height="14" fill="#ff0000"/><rect x="428" y="178" width="3" height="3" fill="#ff0000"/>
<rect x="429" y="179" width="1" height="1" fill="#ff5000"/>
<rect x="433" y="163" width="1" height="20" fill="#ff0000"/><rect x="432" y="168" width="3" height="12" fill="#ff0000"/>
<rect x="433" y="169" width="1" height="10" fill="#ff5000"/>
<rect x="437" y="168" width="1" height="21" fill="#32cd32"/><rect x="436" y="169" width="3" height="4" fill="#32cd32"/>
<rect x="441" y="168" width="1" height="13" fill="#32cd32"/><rect x="440" y="171" width="3" height="6" fill="#32cd32"/>
<rect x="445" y="165" width="1" height="21" fill="#32cd32"/><rect x="444" y="175" width="3" height="5" fill="#32cd32"/>
<rect x="449" y="171" width="1" height="13" fill="#ff0000"/><rect x="448" y="172" width="3" height="9" fill="#ff0000"/>
<rect x="449" y="173" width="1" height="7" fill="#ff5000"/>
<rect x="453" y="170" width="1" height="11" fill="#32cd32"/><rect x="452" y="173" width="3" height="6" fill="#32cd32"/>
<rect x="457" y="163" width="1" height="19" fill="#32cd32"/><rect x="456" y="177" width="3" height="5" fill="#32cd32"/>
<rect x="461" y="169" width="1" height="13" fill="#ff0000"/><rect x="460" y="173" width="3" height="7" fill="#ff0000"/>
<rect x="461" y="174" width="1" height="5" fill="#ff5000"/>
<rect x="465" y="160" width="1" height="17" fill="#ff0000"/><rect x="464" y="162" width="3" height="13" fill="#ff0000"/>
<rect x="465" y="163" width="1" height="11" fill="#ff5000"/>
<rect x="469" y="162" width="1" height="74" fill="#32cd32"/><rect x="468" y="162" width="3" height="68" fill="#32cd32"/>
<rect x="473" y="223" width="1" height="12" fill="#32cd32"/><rect x="472" y="229" width="3" height="5" fill="#32cd32"/>
<rect x="477" y="230" width="1" height="13" fill="#ff0000"/><rect x="476" y="231" width="3" height="2" fill="#ff0000"/>
<rect x="481" y="200" width="1" height="41" fill="#ff0000"/><rect x="480" y="200" width="3" height="33" fill="#ff0000"/>
<rect x="481" y="201" width="1" height="31" fill="#ff5000"/>
<rect x="485" y="190" width="1" height="33" fill="#32cd32"/><rect x="484" y="200" width="3" height="4" fill="#32cd32"/>
<rect x="489" y="189" width="1" height="17" fill="#32cd32"/><rect x="488" y="201" width="3" height="3" fill="#32cd32"/>
<rect x="493" y="187" width="1" height="22" fill="#ff0000"/><rect x="492" y="199" width="3" height="5" fill="#ff0000"/>
<rect x="493" y="200" width="1" height="3" fill="#ff5000"/>
<rect x="497" y="196" width="1" height="19" fill="#32cd32"/><rect x="496" y="199" width="3" height="7" fill="#32cd32"/>
<rect x="501" y="192" width="1" height="15" fill="#ff0000"/><rect x="500" y="197" width="3" height="9" fill="#ff0000"/>
<rect x="501" y="198" width="1" height="7" fill="#ff5000"/>
<rect x="505" y="194" width="1" height="18" fill="#ff0000"/><rect x="504" y="194" width="3" height="3" fill="#ff0000"/>
<rect x="505" y="195" width="1" height="1" fill="#ff5000"/>
<rect x="509" y="169" width="1" height="28" fill="#ff0000"/><rect x="508" y="172" width="3" height="24" fill="#ff0000"/>
<rect x="509" y="173" width="1" height="22" fill="#ff5000"/>
<rect x="513" y="162" width="1" height="21" fill="#32cd32"/><rect x="512" y="173" width="3" height="3" fill="#32cd32"/>
<rect x="517" y="166" width="1" height="16" fill="#ff0000"/><rect x="516" y="168" width="3" height="8" fill="#ff0000"/>
<rect x="517" y="169" width="1" height="6" fill="#ff5000"/>
<rect x="521" y="170" width="1" height="20" fill="#32cd32"/><rect x="520" y="172" width="3" height="17" fill="#32cd32"/>
<rect x="525" y="183" width="1" height="13" fill="#ff0000"/><rect x="524" y="186" width="3" height="3" fill="#ff0000"/>
<rect x="525" y="187" width="1" height="1" fill="#ff5000"/>
<rect x="529" y="175" width="1" height="25" fill="#ff0000"/><rect x="528" y="176" width="3" height="16" fill="#ff0000"/>
<rect x="529" y="177" width="1" height="14" fill="#ff5000"/>
<rect x="533" y="169" width="1" height="25" fill="#32cd32"/><rect x="532" y="175" width="3" height="16" fill="#32cd32"/>
<rect x="537" y="181" width="1" height="17" fill="#ff0000"/><rect x="536" y="182" width="3" height="8" fill="#ff0000"/>
<rect x="537" y="183" width="1" height="6" fill="#ff5000"/>
<rect x="541" y="175" width="1" height="19" fill="#ff0000"/><rect x="540" y="176" width="3" height="8" fill="#ff0000"/>
<rect x="541" y="177" width="1" height="6" fill="#ff5000"/>
<rect x="545" y="175" width="1" height="24" fill="#32cd32"/><rect x="544" y="176" width="3" height="23" fill="#32cd32"/>
<rect x="549" y="194" width="1" height="13" fill="#32cd32"/><rect x="548" y="197" width="3" height="7" fill="#32cd32"/>
<rect x="553" y="199" width="1" height="32" fill="#32cd32"/><rect x="552" y="202" width="3" height="17" fill="#32cd32"/>
<rect x="557" y="200" width="1" height="26" fill="#ff0000"/><rect x="556" y="206" width="3" height="13" fill="#ff0000"/>
<rect x="557" y="207" width="1" height="11" fill="#ff5000"/>
<rect x="561" y="190" width="1" height="20" fill="#ff0000"/><rect x="560" y="191" width="3" height="18" fill="#ff0000"/>
<rect x="561" y="192" width="1" height="16" fill="#ff5000"/>
<rect x="565" y="174" width="1" height="23" fill="#ff0000"/><rect x="564" y="189" width="3" height="4" fill="#ff0000"/>
<rect x="565" y="190" width="1" height="2" fill="#ff5000"/>
<rect x="569" y="173" width="1" height="18" fill="#ff0000"/><rect x="568" y="173" width="3" height="17" fill="#ff0000"/>
<rect x="569" y="174" width="1" height="15" fill="#ff5000"/>
<rect x="573" y="161" width="1" height="16" fill="#ff0000"/><rect x="572" y="171" width="3" height="4" fill="#ff0000"/>
<rect x="573" y="172" width="1" height="2" fill="#ff5000"/>
<rect x="577" y="165" width="1" height="24" fill="#32cd32"/><rect x="576" y="171" width="3" height="15" fill="#32cd32"/>
<rect x="581" y="166" width="1" height="27" fill="#ff0000"/><rect x="580" y="167" width="3" height="18" fill="#ff0000"/>
<rect x="581" y="168" width="1" height="16" fill="#ff5000"/>
<rect x="585" y="158" width="1" height="26" fill="#32cd32"/><rect x="584" y="167" width="3" height="15" fill="#32cd32"/>
<rect x="589" y="179" width="1" height="15" fill="#32cd32"/><rect x="588" y="181" width="3" height="6" fill="#32cd32"/>
<rect x="593" y="184" width="1" height="18" fill="#32cd32"/><rect x="592" y="185" width="3" height="12" fill="#32cd32"/>
<rect x="597" y="189" width="1" height="18" fill="#ff0000"/><rect x="596" y="190" width="3" height="7" fill="#ff0000"/>
<rect x="597" y="191" width="1" height="5" fill="#ff5000"/>
<rect x="601" y="175" width="1" height="22" fill="#ff0000"/><rect x="600" y="182" width="3" height="8" fill="#ff0000"/>
<rect x="601" y="183" width="1" height="6" fill="#ff5000"/>
<rect x="605" y="181" width="1" height="73" fill="#32cd32"/><rect x="604" y="182" width="3" height="70" fill="#32cd32"/>
<rect x="609" y="238" width="1" height="23" fill="#ff0000"/><rect x="608" y="239" width="3" height="12" fill="#ff0000"/>
<rect x="609" y="240" width="1" height="10" fill="#ff5000"/>
<rect x="613" y="225" width="1" height="20" fill="#ff0000"/><rect x="612" y="228" width="3" height="13" fill="#ff0000"/>
<rect x="613" y="229" width="1" height="11" fill="#ff5000"/>
<rect x="617" y="222" width="1" height="18" fill="#32cd32"/><rect x="616" y="229" width="3" height="5" fill="#32cd32"/>
<rect x="621" y="230" width="1" height="9" fill="#32cd32"/><rect x="620" y="232" width="3" height="3" fill="#32cd32"/>
<rect x="625" y="217" width="1" height="19" fill="#ff0000"/><rect x="624" y="222" width="3" height="13" fill="#ff0000"/>
<rect x="625" y="223" width="1" height="11" fill="#ff5000"/>
<rect x="629" y="220" width="1" height="34" fill="#32cd32"/><rect x="628" y="222" width="3" height="14" fill="#32cd32"/>
<rect x="633" y="235" width="1" height="10" fill="#32cd32"/><rect x="632" y="236" width="3" height="6" fill="#32cd32"/>
<rect x="637" y="237" width="1" height="31" fill="#32cd32"/><rect x="636" y="240" width="3" height="26" fill="#32cd32"/>
<rect x="641" y="250" width="1" height="35" fill="#32cd32"/><rect x="640" y="254" width="3" height="27" fill="#32cd32"/>
<rect x="645" y="269" width="1" height="13" fill="#ff0000"/><rect x="644" y="270" width="3" height="11" fill="#ff0000"/>
<rect x="645" y="271" width="1" height="9" fill="#ff5000"/>
<rect x="649" y="255" width="1" height="21" fill="#ff0000"/><rect x="648" y="258" width="3" height="14" fill="#ff0000"/>
<rect x="649" y="259" width="1" height="12" fill="#ff5000"/>
<rect x="653" y="252" width="1" height="23" fill="#32cd32"/><rect x="652" y="258" width="3" height="11" fill="#32cd32"/>
<rect x="657" y="263" width="1" height="25" fill="#ff0000"/><rect x="656" y="264" width="3" height="5" fill="#ff0000"/>
<rect x="657" y="265" width="1" height="3" fill="#ff5000"/>
<rect x="661" y="254" width="1" height="19" fill="#ff0000"/><rect x="660" y="259" width="3" height="7" fill="#ff0000"/>
<rect x="661" y="260" width="1" height="5" fill="#ff5000"/>
<rect x="665" y="254" width="1" height="17" fill="#32cd32"/><rect x="664" y="259" width="3" height="9" fill="#32cd32"/>
<rect x="669" y="262" width="1" height="12" fill="#ff0000"/><rect x="668" y="265" width="3" height="3" fill="#ff0000"/>
<rect x="669" y="266" width="1" height="1" fill="#ff5000"/>
<rect x="673" y="262" width="1" height="29" fill="#32cd32"/><rect x="672" y="266" width="3" height="16" fill="#32cd32"/>
<rect x="677" y="247" width="1" height="37" fill="#ff0000"/><rect x="676" y="253" width="3" height="29" fill="#ff0000"/>
<rect x="677" y="254" width="1" height="27" fill="#ff5000"/>
<rect x="681" y="237" width="1" height="20" fill="#ff0000"/><rect x="680" y="238" width="3" height="16" fill="#ff0000"/>
<rect x="681" y="239" width="1" height="14" fill="#ff5000"/>
<rect x="685" y="222" width="1" height="21" fill="#ff0000"/><rect x="684" y="232" width="3" height="6" fill="#ff0000"/>
<rect x="685" y="233" width="1" height="4" fill="#ff5000"/>
<rect x="689" y="226" width="1" height="15" fill="#32cd32"/><rect x="688" y="232" width="3" height="4" fill="#32cd32"/>
<rect x="693" y="228" width="1" height="13" fill="#ff0000"/><rect x="692" y="228" width="3" height="7" fill="#ff0000"/>
<rect x="693" y="229" width="1" height="5" fill="#ff5000"/>
<rect x="697" y="218" width="1" height="19" fill="#ff0000"/><rect x="696" y="218" width="3" height="12" fill="#ff0000"/>
<rect x="697" y="219" width="1" height="10" fill="#ff5000"/>
<rect x="701" y="197" width="1" height="38" fill="#32cd32"/><rect x="700" y="219" width="3" height="10" fill="#32cd32"/>
<rect x="705" y="226" width="1" height="18" fill="#32cd32"/><rect x="704" y="228" width="3" height="10" fill="#32cd32"/>
<rect x="709" y="229" width="1" height="17" fill="#ff0000"/><rect x="708" y="231" width="3" height="7" fill="#ff0000"/>
<rect x="709" y="232" width="1" height="5" fill="#ff5000"/>
<rect x="713" y="221" width="1" height="18" fill="#ff0000"/><rect x="712" y="222" width="3" height="11" fill="#ff0000"/>
<rect x="713" y="223" width="1" height="9" fill="#ff5000"/>
<rect x="717" y="219" width="1" height="10" fill="#32cd32"/><rect x="716" y="222" width="3" height="4" fill="#32cd32"/>
<rect x="721" y="225" width="1" height="21" fill="#32cd32"/><rect x="720" y="225" width="3" height="14" fill="#32cd32"/>
<rect x="725" y="217" width="1" height="31" fill="#ff0000"/><rect x="724" y="225" width="3" height="14" fill="#ff0000"/>
<rect x="725" y="226" width="1" height="12" fill="#ff5000"/>
<rect x="729" y="207" width="1" height="21" fill="#32cd32"/><rect x="728" y="223" width="3" height="3" fill="#32cd32"/>
<rect x="733" y="217" width="1" height="13" fill="#32cd32"/><rect x="732" y="224" width="3" height="4" fill="#32cd32"/>
<rect x="737" y="219" width="1" height="17" fill="#ff0000"/><rect x="736" y="220" width="3" height="8" fill="#ff0000"/>
<rect x="737" y="221" width="1" height="6" fill="#ff5000"/>
<rect x="741" y="211" width="1" height="13" fill="#ff0000"/><rect x="740" y="215" width="3" height="7" fill="#ff0000"/>
<rect x="741" y="216" width="1" height="5" fill="#ff5000"/>
<rect x="745" y="187" width="1" height="36" fill="#ff0000"/><rect x="744" y="197" width="3" height="19" fill="#ff0000"/>
<rect x="745" y="198" width="1" height="17" fill="#ff5000"/>
<rect x="749" y="181" width="1" height="22" fill="#ff0000"/><rect x="748" y="188" width="3" height="11" fill="#ff0000"/>
<rect x="749" y="189" width="1" height="9" fill="#ff5000"/>
<rect x="753" y="184" width="1" height="16" fill="#32cd32"/><rect x="752" y="188" width="3" height="11" fill="#32cd32"/>
<rect x="757" y="184" width="1" height="17" fill="#ff0000"/><rect x="756" y="185" width="3" height="14" fill="#ff0000"/>
<rect x="757" y="186" width="1" height="12" fill="#ff5000"/>
<rect x="761" y="183" width="1" height="14" fill="#ff0000"/><rect x="760" y="187" width="3" height="7" fill="#ff0000"/>
<rect x="761" y="188" width="1" height="5" fill="#ff5000"/>
<rect x="765" y="182" width="1" height="11" fill="#32cd32"/><rect x="764" y="187" width="3" height="3" fill="#32cd32"/>
<rect x="769" y="187" width="1" height="26" fill="#32cd32"/><rect x="768" y="189" width="3" height="22" fill="#32cd32"/>
<rect x="773" y="209" width="1" height="34" fill="#32cd32"/><rect x="772" y="209" width="3" height="27" fill="#32cd32"/>
<rect x="777" y="217" width="1" height="20" fill="#ff0000"/><rect x="776" y="217" width="3" height="19" fill="#ff0000"/>
<rect x="777" y="218" width="1" height="17" fill="#ff5000"/>
<rect x="781" y="216" width="1" height="23" fill="#32cd32"/><rect x="780" y="217" width="3" height="19" fill="#32cd32"/>
<rect x="785" y="226" width="1" height="13" fill="#ff0000"/><rect x="784" y="233" width="3" height="2" fill="#ff0000"/>
<rect x="789" y="224" width="1" height="15" fill="#ff0000"/><rect x="788" y="225" width="3" height="10" fill="#ff0000"/>
<rect x="789" y="226" width="1" height="8" fill="#ff5000"/>
<rect x="793" y="224" width="1" height="27" fill="#32cd32"/><rect x="792" y="225" width="3" height="24" fill="#32cd32"/>
<rect x="797" y="235" width="1" height="24" fill="#ff0000"/><rect x="796" y="235" width="3" height="14" fill="#ff0000"/>
<rect x="797" y="236" width="1" height="12" fill="#ff5000"/>
<rect x="801" y="230" width="1" height="12" fill="#ff0000"/><rect x="800" y="231" width="3" height="6" fill="#ff0000"/>
<rect x="801" y="232" width="1" height="4" fill="#ff5000"/>
<rect x="805" y="223" width="1" height="18" fill="#32cd32"/><rect x="804" y="231" width="3" height="3" fill="#32cd32"/>
<rect x="809" y="229" width="1" height="16" fill="#32cd32"/><rect x="808" y="232" width="3" height="11" fill="#32cd32"/>
<rect x="813" y="233" width="1" height="11" fill="#ff0000"/><rect x="812" y="235" width="3" height="8" fill="#ff0000"/>
<rect x="813" y="236" width="1" height="6" fill="#ff5000"/>
<rect x="817" y="226" width="1" height="22" fill="#ff0000"/><rect x="816" y="229" width="3" height="8" fill="#ff0000"/>
<rect x="817" y="230" width="1" height="6" fill="#ff5000"/>
<rect x="821" y="218" width="1" height="30" fill="#32cd32"/><rect x="820" y="230" width="3" height="16" fill="#32cd32"/>
<rect x="825" y="229" width="1" height="23" fill="#ff0000"/><rect x="824" y="230" width="3" height="17" fill="#ff0000"/>
<rect x="825" y="231" width="1" height="15" fill="#ff5000"/>
<rect x="829" y="216" width="1" height="36" fill="#ff0000"/><rect x="828" y="218" width="3" height="14" fill="#ff0000"/>
<rect x="829" y="219" width="1" height="12" fill="#ff5000"/>
<rect x="833" y="206" width="1" height="19" fill="#ff0000"/><rect x="832" y="211" width="3" height="9" fill="#ff0000"/>
<rect x="833" y="212" width="1" height="7" fill="#ff5000"/>
<rect x="837" y="209" width="1" height="27" fill="#32cd32"/><rect x="836" y="211" width="3" height="24" fill="#32cd32"/>
<rect x="841" y="231" width="1" height="60" fill="#32cd32"/><rect x="840" y="232" width="3" height="57" fill="#32cd32"/>
<rect x="845" y="250" width="1" height="39" fill="#ff0000"/><rect x="844" y="252" width="3" height="37" fill="#ff0000"/>
<rect x="845" y="253" width="1" height="35" fill="#ff5000"/>
<rect x="849" y="221" width="1" height="32" fill="#ff0000"/><rect x="848" y="226" width="3" height="27" fill="#ff0000"/>
<rect x="849" y="227" width="1" height="25" fill="#ff5000"/>
<rect x="853" y="223" width="1" height="90" fill="#32cd32"/><rect x="852" y="226" width="3" height="61" fill="#32cd32"/>
<rect x="857" y="275" width="1" height="16" fill="#32cd32"/><rect x="856" y="284" width="3" height="5" fill="#32cd32"/>
<rect x="861" y="277" width="1" height="17" fill="#ff0000"/><rect x="860" y="283" width="3" height="5" fill="#ff0000"/>
<rect x="861" y="284" width="1" height="3" fill="#ff5000"/>
<rect x="865" y="245" width="1" height="49" fill="#ff0000"/><rect x="864" y="256" width="3" height="29" fill="#ff0000"/>
<rect x="865" y="257" width="1" height="27" fill="#ff5000"/>
<rect x="869" y="240" width="1" height="23" fill="#ff0000"/><rect x="868" y="248" width="3" height="10" fill="#ff0000"/>
<rect x="869" y="249" width="1" height="8" fill="#ff5000"/>
<rect x="873" y="229" width="1" height="21" fill="#32cd32"/><rect x="872" y="248" width="3" height="3" fill="#32cd32"/>
<rect x="877" y="210" width="1" height="47" fill="#ff0000"/><rect x="876" y="212" width="3" height="38" fill="#ff0000"/>
<rect x="877" y="213" width="1" height="36" fill="#ff5000"/>
<rect x="881" y="219" width="1" height="13" fill="#32cd32"/><rect x="880" y="222" width="3" height="5" fill="#32cd32"/>
<rect x="885" y="220" width="1" height="12" fill="#ff0000"/><rect x="884" y="221" width="3" height="6" fill="#ff0000"/>
<rect x="885" y="222" width="1" height="4" fill="#ff5000"/>
<rect x="889" y="210" width="1" height="21" fill="#ff0000"/><rect x="888" y="216" width="3" height="6" fill="#ff0000"/>
<rect x="889" y="217" width="1" height="4" fill="#ff5000"/>
<rect x="893" y="216" width="1" height="76" fill="#32cd32"/><rect x="892" y="216" width="3" height="76" fill="#32cd32"/>
<rect x="897" y="248" width="1" height="45" fill="#ff0000"/><rect x="896" y="264" width="3" height="28" fill="#ff0000"/>
<rect x="897" y="265" width="1" height="26" fill="#ff5000"/>
<rect x="901" y="262" width="1" height="29" fill="#32cd32"/><rect x="900" y="264" width="3" height="18" fill="#32cd32"/>
<rect x="905" y="280" width="1" height="15" fill="#32cd32"/><rect x="904" y="281" width="3" height="14" fill="#32cd32"/>
<rect x="909" y="276" width="1" height="27" fill="#ff0000"/><rect x="908" y="293" width="3" height="7" fill="#ff0000"/>
<rect x="909" y="294" width="1" height="5" fill="#ff5000"/>
<rect x="913" y="286" width="1" height="11" fill="#ff0000"/><rect x="912" y="288" width="3" height="7" fill="#ff0000"/>
<rect x="913" y="289" width="1" height="5" fill="#ff5000"/>
<rect x="917" y="262" width="1" height="29" fill="#ff0000"/><rect x="916" y="263" width="3" height="27" fill="#ff0000"/>
<rect x="917" y="264" width="1" height="25" fill="#ff5000"/>
<rect x="921" y="231" width="1" height="36" fill="#ff0000"/><rect x="920" y="236" width="3" height="29" fill="#ff0000"/>
<rect x="921" y="237" width="1" height="27" fill="#ff5000"/>
<rect x="925" y="236" width="1" height="27" fill="#32cd32"/><rect x="924" y="236" width="3" height="27" fill="#32cd32"/>
<rect x="929" y="208" width="1" height="58" fill="#ff0000"/><rect x="928" y="212" width="3" height="51" fill="#ff0000"/>
<rect x="929" y="213" width="1" height="49" fill="#ff5000"/>
<rect x="933" y="199" width="1" height="42" fill="#32cd32"/><rect x="932" y="212" width="3" height="24" fill="#32cd32"/>
<rect x="937" y="226" width="1" height="15" fill="#ff0000"/><rect x="936" y="234" width="3" height="2" fill="#ff0000"/>
<rect x="941" y="229" width="1" height="28" fill="#32cd32"/><rect x="940" y="234" width="3" height="23" fill="#32cd32"/>
<rect x="945" y="234" width="1" height="78" fill="#32cd32"/><rect x="944" y="257" width="3" height="55" fill="#32cd32"/>
<rect x="949" y="252" width="1" height="62" fill="#ff0000"/><rect x="948" y="257" width="3" height="55" fill="#ff0000"/>
<rect x="949" y="258" width="1" height="53" fill="#ff5000"/>
<rect x="953" y="248" width="1" height="47" fill="#32cd32"/><rect x="952" y="259" width="3" height="36" fill="#32cd32"/>
<rect x="957" y="270" width="1" height="39" fill="#32cd32"/><rect x="956" y="293" width="3" height="15" fill="#32cd32"/>
<rect x="961" y="306" width="1" height="6" fill="#32cd32"/><rect x="960" y="306" width="3" height="5" fill="#32cd32"/>
<rect x="965" y="289" width="1" height="49" fill="#32cd32"/><rect x="964" y="308" width="3" height="23" fill="#32cd32"/>
<rect x="969" y="329" width="1" height="30" fill="#32cd32"/><rect x="968" y="330" width="3" height="17" fill="#32cd32"/>
<rect x="973" y="310" width="1" height="39" fill="#ff0000"/><rect x="972" y="312" width="3" height="35" fill="#ff0000"/>
<rect x="973" y="313" width="1" height="33" fill="#ff5000"/>
<rect x="977" y="295" width="1" height="27" fill="#ff0000"/><rect x="976" y="296" width="3" height="23" fill="#ff0000"/>
<rect x="977" y="297" width="1" height="21" fill="#ff5000"/>
<rect x="981" y="307" width="1" height="13" fill="#ff0000"/><rect x="980" y="308" width="3" height="6" fill="#ff0000"/>
<rect x="981" y="309" width="1" height="4" fill="#ff5000"/>
<rect x="985" y="294" width="1" height="21" fill="#ff0000"/><rect x="984" y="303" width="3" height="7" fill="#ff0000"/>
<rect x="985" y="304" width="1" height="5" fill="#ff5000"/>
<rect x="989" y="290" width="1" height="30" fill="#32cd32"/><rect x="988" y="303" width="3" height="9" fill="#32cd32"/>
<rect x="993" y="280" width="1" height="44" fill="#ff0000"/><rect x="992" y="288" width="3" height="24" fill="#ff0000"/>
<rect x="993" y="289" width="1" height="22" fill="#ff5000"/>
<rect x="997" y="281" width="1" height="37" fill="#32cd32"/><rect x="996" y="288" width="3" height="15" fill="#32cd32"/>
<rect x="1001" y="299" width="1" height="26" fill="#32cd32"/><rect x="1000" y="301" width="3" height="22" fill="#32cd32"/>
<rect x="1005" y="313" width="1" height="33" fill="#32cd32"/><rect x="1004" y="321" width="3" height="20" fill="#32cd32"/>
<rect x="1009" y="313" width="1" height="32" fill="#ff0000"/><rect x="1008" y="315" width="3" height="26" fill="#ff0000"/>
<rect x="1009" y="316" width="1" height="24" fill="#ff5000"/>
<rect x="1013" y="314" width="1" height="39" fill="#32cd32"/><rect x="1012" y="315" width="3" height="26" fill="#32cd32"/>
<rect x="1017" y="308" width="1" height="37" fill="#ff0000"/><rect x="1016" y="309" width="3" height="32" fill="#ff0000"/>
<rect x="1017" y="310" width="1" height="30" fill="#ff5000"/>
<rect x="1021" y="262" width="1" height="50" fill="#ff0000"/><rect x="1020" y="269" width="3" height="41" fill="#ff0000"/>
<rect x="1021" y="270" width="1" height="39" fill="#ff5000"/>
<rect x="1025" y="262" width="1" height="15" fill="#32cd32"/><rect x="1024" y="269" width="3" height="4" fill="#32cd32"/>
<rect x="1029" y="238" width="1" height="38" fill="#ff0000"/><rect x="1028" y="254" width="3" height="20" fill="#ff0000"/>
<rect x="1029" y="255" width="1" height="18" fill="#ff5000"/>
<rect x="1033" y="249" width="1" height="46" fill="#32cd32"/><rect x="1032" y="254" width="3" height="40" fill="#32cd32"/>
<rect x="1037" y="280" width="1" height="15" fill="#ff0000"/><rect x="1036" y="283" width="3" height="11" fill="#ff0000"/>
<rect x="1037" y="284" width="1" height="9" fill="#ff5000"/>
</g>
<g shape-rendering="crispEdges"><rect x="794" y="250" width="382" height="2" fill="#ff3030"/><rect x="848" y="299" width="309" height="2" fill="#9acd32"/><rect x="962" y="360" width="181" height="2" fill="#1e90ff"/></g>
<rect x="1307" y="278" width="41" height="11" fill="#000" shape-rendering="crispEdges"/>
<text x="1311.00" y="287.00" font-size="9.72" textLength="33.13" lengthAdjust="spacingAndGlyphs" text-rendering="geometricPrecision" fill="#fff">0.98706</text>
<path d="M8 41.5 L11.5 38 L15 41.5 Z" fill="#000"/>
<text x="20.00" y="43.00" font-size="9.72" textLength="202.60" lengthAdjust="spacingAndGlyphs" text-rendering="geometricPrecision" fill="#000" xml:space="preserve" stroke="#000" stroke-width="0.25">USDCHF,H4  0.98608 0.98736 0.98598 0.98706</text>
<text x="9.00" y="381.00" font-size="9.72" textLength="153.76" lengthAdjust="spacingAndGlyphs" text-rendering="geometricPrecision" fill="#000" stroke="#000" stroke-width="0.25">MACD(12,26,9) -0.000110 -0.001015</text>
<g clip-path="url(#cmacd)" shape-rendering="crispEdges">
<rect x="5" y="378" width="1" height="22" fill="#c0c0c0"/>
<rect x="9" y="381" width="1" height="19" fill="#c0c0c0"/>
<rect x="13" y="386" width="1" height="14" fill="#c0c0c0"/>
<rect x="17" y="389" width="1" height="11" fill="#c0c0c0"/>
<rect x="21" y="392" width="1" height="8" fill="#c0c0c0"/>
<rect x="25" y="397" width="1" height="3" fill="#c0c0c0"/>
<rect x="29" y="400" width="1" height="1" fill="#c0c0c0"/>
<rect x="33" y="399" width="1" height="1" fill="#c0c0c0"/>
<rect x="37" y="397" width="1" height="3" fill="#c0c0c0"/>
<rect x="41" y="396" width="1" height="4" fill="#c0c0c0"/>
<rect x="45" y="395" width="1" height="5" fill="#c0c0c0"/>
<rect x="49" y="394" width="1" height="6" fill="#c0c0c0"/>
<rect x="53" y="394" width="1" height="6" fill="#c0c0c0"/>
<rect x="57" y="393" width="1" height="7" fill="#c0c0c0"/>
<rect x="61" y="394" width="1" height="6" fill="#c0c0c0"/>
<rect x="65" y="393" width="1" height="7" fill="#c0c0c0"/>
<rect x="69" y="394" width="1" height="6" fill="#c0c0c0"/>
<rect x="73" y="394" width="1" height="6" fill="#c0c0c0"/>
<rect x="77" y="395" width="1" height="5" fill="#c0c0c0"/>
<rect x="81" y="395" width="1" height="5" fill="#c0c0c0"/>
<rect x="85" y="396" width="1" height="4" fill="#c0c0c0"/>
<rect x="89" y="399" width="1" height="1" fill="#c0c0c0"/>
<rect x="93" y="400" width="1" height="1" fill="#c0c0c0"/>
<rect x="97" y="400" width="1" height="9" fill="#c0c0c0"/>
<rect x="101" y="400" width="1" height="13" fill="#c0c0c0"/>
<rect x="105" y="400" width="1" height="14" fill="#c0c0c0"/>
<rect x="109" y="400" width="1" height="14" fill="#c0c0c0"/>
<rect x="113" y="400" width="1" height="11" fill="#c0c0c0"/>
<rect x="117" y="400" width="1" height="9" fill="#c0c0c0"/>
<rect x="121" y="400" width="1" height="7" fill="#c0c0c0"/>
<rect x="125" y="400" width="1" height="5" fill="#c0c0c0"/>
<rect x="129" y="400" width="1" height="4" fill="#c0c0c0"/>
<rect x="133" y="400" width="1" height="1" fill="#c0c0c0"/>
<rect x="137" y="395" width="1" height="5" fill="#c0c0c0"/>
<rect x="141" y="390" width="1" height="10" fill="#c0c0c0"/>
<rect x="145" y="388" width="1" height="12" fill="#c0c0c0"/>
<rect x="149" y="387" width="1" height="13" fill="#c0c0c0"/>
<rect x="153" y="388" width="1" height="12" fill="#c0c0c0"/>
<rect x="157" y="388" width="1" height="12" fill="#c0c0c0"/>
<rect x="161" y="388" width="1" height="12" fill="#c0c0c0"/>
<rect x="165" y="385" width="1" height="15" fill="#c0c0c0"/>
<rect x="169" y="381" width="1" height="19" fill="#c0c0c0"/>
<rect x="173" y="379" width="1" height="21" fill="#c0c0c0"/>
<rect x="177" y="378" width="1" height="22" fill="#c0c0c0"/>
<rect x="181" y="377" width="1" height="23" fill="#c0c0c0"/>
<rect x="185" y="375" width="1" height="25" fill="#c0c0c0"/>
<rect x="189" y="375" width="1" height="25" fill="#c0c0c0"/>
<rect x="193" y="373" width="1" height="27" fill="#c0c0c0"/>
<rect x="197" y="373" width="1" height="27" fill="#c0c0c0"/>
<rect x="201" y="375" width="1" height="25" fill="#c0c0c0"/>
<rect x="205" y="378" width="1" height="22" fill="#c0c0c0"/>
<rect x="209" y="382" width="1" height="18" fill="#c0c0c0"/>
<rect x="213" y="385" width="1" height="15" fill="#c0c0c0"/>
<rect x="217" y="384" width="1" height="16" fill="#c0c0c0"/>
<rect x="221" y="386" width="1" height="14" fill="#c0c0c0"/>
<rect x="225" y="388" width="1" height="12" fill="#c0c0c0"/>
<rect x="229" y="393" width="1" height="7" fill="#c0c0c0"/>
<rect x="233" y="395" width="1" height="5" fill="#c0c0c0"/>
<rect x="237" y="398" width="1" height="2" fill="#c0c0c0"/>
<rect x="241" y="398" width="1" height="2" fill="#c0c0c0"/>
<rect x="245" y="400" width="1" height="1" fill="#c0c0c0"/>
<rect x="249" y="400" width="1" height="1" fill="#c0c0c0"/>
<rect x="253" y="400" width="1" height="2" fill="#c0c0c0"/>
<rect x="257" y="400" width="1" height="2" fill="#c0c0c0"/>
<rect x="261" y="400" width="1" height="3" fill="#c0c0c0"/>
<rect x="265" y="400" width="1" height="1" fill="#c0c0c0"/>
<rect x="269" y="400" width="1" height="6" fill="#c0c0c0"/>
<rect x="273" y="400" width="1" height="9" fill="#c0c0c0"/>
<rect x="277" y="400" width="1" height="14" fill="#c0c0c0"/>
<rect x="281" y="400" width="1" height="18" fill="#c0c0c0"/>
<rect x="285" y="400" width="1" height="20" fill="#c0c0c0"/>
<rect x="289" y="400" width="1" height="26" fill="#c0c0c0"/>
<rect x="293" y="400" width="1" height="31" fill="#c0c0c0"/>
<rect x="297" y="400" width="1" height="36" fill="#c0c0c0"/>
<rect x="301" y="400" width="1" height="40" fill="#c0c0c0"/>
<rect x="305" y="400" width="1" height="45" fill="#c0c0c0"/>
<rect x="309" y="400" width="1" height="47" fill="#c0c0c0"/>
<rect x="313" y="400" width="1" height="48" fill="#c0c0c0"/>
<rect x="317" y="400" width="1" height="48" fill="#c0c0c0"/>
<rect x="321" y="400" width="1" height="47" fill="#c0c0c0"/>
<rect x="325" y="400" width="1" height="44" fill="#c0c0c0"/>
<rect x="329" y="400" width="1" height="42" fill="#c0c0c0"/>
<rect x="333" y="400" width="1" height="40" fill="#c0c0c0"/>
<rect x="337" y="400" width="1" height="37" fill="#c0c0c0"/>
<rect x="341" y="400" width="1" height="34" fill="#c0c0c0"/>
<rect x="345" y="400" width="1" height="32" fill="#c0c0c0"/>
<rect x="349" y="400" width="1" height="30" fill="#c0c0c0"/>
<rect x="353" y="400" width="1" height="29" fill="#c0c0c0"/>
<rect x="357" y="400" width="1" height="28" fill="#c0c0c0"/>
<rect x="361" y="400" width="1" height="27" fill="#c0c0c0"/>
<rect x="365" y="400" width="1" height="25" fill="#c0c0c0"/>
<rect x="369" y="400" width="1" height="23" fill="#c0c0c0"/>
<rect x="373" y="400" width="1" height="22" fill="#c0c0c0"/>
<rect x="377" y="400" width="1" height="21" fill="#c0c0c0"/>
<rect x="381" y="400" width="1" height="20" fill="#c0c0c0"/>
<rect x="385" y="400" width="1" height="15" fill="#c0c0c0"/>
<rect x="389" y="400" width="1" height="12" fill="#c0c0c0"/>
<rect x="393" y="400" width="1" height="8" fill="#c0c0c0"/>
<rect x="397" y="400" width="1" height="6" fill="#c0c0c0"/>
<rect x="401" y="400" width="1" height="3" fill="#c0c0c0"/>
<rect x="405" y="400" width="1" height="2" fill="#c0c0c0"/>
<rect x="409" y="400" width="1" height="1" fill="#c0c0c0"/>
<rect x="413" y="399" width="1" height="1" fill="#c0c0c0"/>
<rect x="417" y="396" width="1" height="4" fill="#c0c0c0"/>
<rect x="421" y="394" width="1" height="6" fill="#c0c0c0"/>
<rect x="425" y="394" width="1" height="6" fill="#c0c0c0"/>
<rect x="429" y="393" width="1" height="7" fill="#c0c0c0"/>
<rect x="433" y="391" width="1" height="9" fill="#c0c0c0"/>
<rect x="437" y="391" width="1" height="9" fill="#c0c0c0"/>
<rect x="441" y="391" width="1" height="9" fill="#c0c0c0"/>
<rect x="445" y="391" width="1" height="9" fill="#c0c0c0"/>
<rect x="449" y="391" width="1" height="9" fill="#c0c0c0"/>
<rect x="453" y="391" width="1" height="9" fill="#c0c0c0"/>
<rect x="457" y="392" width="1" height="8" fill="#c0c0c0"/>
<rect x="461" y="392" width="1" height="8" fill="#c0c0c0"/>
<rect x="465" y="391" width="1" height="9" fill="#c0c0c0"/>
<rect x="469" y="397" width="1" height="3" fill="#c0c0c0"/>
<rect x="473" y="400" width="1" height="3" fill="#c0c0c0"/>
<rect x="477" y="400" width="1" height="8" fill="#c0c0c0"/>
<rect x="481" y="400" width="1" height="7" fill="#c0c0c0"/>
<rect x="485" y="400" width="1" height="7" fill="#c0c0c0"/>
<rect x="489" y="400" width="1" height="7" fill="#c0c0c0"/>
<rect x="493" y="400" width="1" height="7" fill="#c0c0c0"/>
<rect x="497" y="400" width="1" height="7" fill="#c0c0c0"/>
<rect x="501" y="400" width="1" height="6" fill="#c0c0c0"/>
<rect x="505" y="400" width="1" height="5" fill="#c0c0c0"/>
<rect x="509" y="400" width="1" height="1" fill="#c0c0c0"/>
<rect x="513" y="399" width="1" height="1" fill="#c0c0c0"/>
<rect x="517" y="396" width="1" height="4" fill="#c0c0c0"/>
<rect x="521" y="396" width="1" height="4" fill="#c0c0c0"/>
<rect x="525" y="396" width="1" height="4" fill="#c0c0c0"/>
<rect x="529" y="395" width="1" height="5" fill="#c0c0c0"/>
<rect x="533" y="396" width="1" height="4" fill="#c0c0c0"/>
<rect x="537" y="396" width="1" height="4" fill="#c0c0c0"/>
<rect x="541" y="395" width="1" height="5" fill="#c0c0c0"/>
<rect x="545" y="397" width="1" height="3" fill="#c0c0c0"/>
<rect x="549" y="399" width="1" height="1" fill="#c0c0c0"/>
<rect x="553" y="400" width="1" height="3" fill="#c0c0c0"/>
<rect x="557" y="400" width="1" height="4" fill="#c0c0c0"/>
<rect x="561" y="400" width="1" height="3" fill="#c0c0c0"/>
<rect x="565" y="400" width="1" height="2" fill="#c0c0c0"/>
<rect x="569" y="399" width="1" height="1" fill="#c0c0c0"/>
<rect x="573" y="397" width="1" height="3" fill="#c0c0c0"/>
<rect x="577" y="397" width="1" height="3" fill="#c0c0c0"/>
<rect x="581" y="395" width="1" height="5" fill="#c0c0c0"/>
<rect x="585" y="395" width="1" height="5" fill="#c0c0c0"/>
<rect x="589" y="396" width="1" height="4" fill="#c0c0c0"/>
<rect x="593" y="397" width="1" height="3" fill="#c0c0c0"/>
<rect x="597" y="398" width="1" height="2" fill="#c0c0c0"/>
<rect x="601" y="398" width="1" height="2" fill="#c0c0c0"/>
<rect x="605" y="400" width="1" height="5" fill="#c0c0c0"/>
<rect x="609" y="400" width="1" height="10" fill="#c0c0c0"/>
<rect x="613" y="400" width="1" height="12" fill="#c0c0c0"/>
<rect x="617" y="400" width="1" height="14" fill="#c0c0c0"/>
<rect x="621" y="400" width="1" height="16" fill="#c0c0c0"/>
<rect x="625" y="400" width="1" height="16" fill="#c0c0c0"/>
<rect x="629" y="400" width="1" height="17" fill="#c0c0c0"/>
<rect x="633" y="400" width="1" height="18" fill="#c0c0c0"/>
<rect x="637" y="400" width="1" height="22" fill="#c0c0c0"/>
<rect x="641" y="400" width="1" height="26" fill="#c0c0c0"/>
<rect x="645" y="400" width="1" height="28" fill="#c0c0c0"/>
<rect x="649" y="400" width="1" height="28" fill="#c0c0c0"/>
<rect x="653" y="400" width="1" height="29" fill="#c0c0c0"/>
<rect x="657" y="400" width="1" height="28" fill="#c0c0c0"/>
<rect x="661" y="400" width="1" height="27" fill="#c0c0c0"/>
<rect x="665" y="400" width="1" height="27" fill="#c0c0c0"/>
<rect x="669" y="400" width="1" height="26" fill="#c0c0c0"/>
<rect x="673" y="400" width="1" height="27" fill="#c0c0c0"/>
<rect x="677" y="400" width="1" height="25" fill="#c0c0c0"/>
<rect x="681" y="400" width="1" height="20" fill="#c0c0c0"/>
<rect x="685" y="400" width="1" height="16" fill="#c0c0c0"/>
<rect x="689" y="400" width="1" height="13" fill="#c0c0c0"/>
<rect x="693" y="400" width="1" height="9" fill="#c0c0c0"/>
<rect x="697" y="400" width="1" height="5" fill="#c0c0c0"/>
<rect x="701" y="400" width="1" height="3" fill="#c0c0c0"/>
<rect x="705" y="400" width="1" height="3" fill="#c0c0c0"/>
<rect x="709" y="400" width="1" height="2" fill="#c0c0c0"/>
<rect x="713" y="400" width="1" height="1" fill="#c0c0c0"/>
<rect x="717" y="398" width="1" height="2" fill="#c0c0c0"/>
<rect x="721" y="399" width="1" height="1" fill="#c0c0c0"/>
<rect x="725" y="398" width="1" height="2" fill="#c0c0c0"/>
<rect x="729" y="397" width="1" height="3" fill="#c0c0c0"/>
<rect x="733" y="397" width="1" height="3" fill="#c0c0c0"/>
<rect x="737" y="396" width="1" height="4" fill="#c0c0c0"/>
<rect x="741" y="394" width="1" height="6" fill="#c0c0c0"/>
<rect x="745" y="391" width="1" height="9" fill="#c0c0c0"/>
<rect x="749" y="388" width="1" height="12" fill="#c0c0c0"/>
<rect x="753" y="386" width="1" height="14" fill="#c0c0c0"/>
<rect x="757" y="384" width="1" height="16" fill="#c0c0c0"/>
<rect x="761" y="383" width="1" height="17" fill="#c0c0c0"/>
<rect x="765" y="382" width="1" height="18" fill="#c0c0c0"/>
<rect x="769" y="384" width="1" height="16" fill="#c0c0c0"/>
<rect x="773" y="389" width="1" height="11" fill="#c0c0c0"/>
<rect x="777" y="390" width="1" height="10" fill="#c0c0c0"/>
<rect x="781" y="394" width="1" height="6" fill="#c0c0c0"/>
<rect x="785" y="397" width="1" height="3" fill="#c0c0c0"/>
<rect x="789" y="398" width="1" height="2" fill="#c0c0c0"/>
<rect x="793" y="400" width="1" height="1" fill="#c0c0c0"/>
<rect x="797" y="400" width="1" height="3" fill="#c0c0c0"/>
<rect x="801" y="400" width="1" height="3" fill="#c0c0c0"/>
<rect x="805" y="400" width="1" height="4" fill="#c0c0c0"/>
<rect x="809" y="400" width="1" height="5" fill="#c0c0c0"/>
<rect x="813" y="400" width="1" height="5" fill="#c0c0c0"/>
<rect x="817" y="400" width="1" height="5" fill="#c0c0c0"/>
<rect x="821" y="400" width="1" height="6" fill="#c0c0c0"/>
<rect x="825" y="400" width="1" height="6" fill="#c0c0c0"/>
<rect x="829" y="400" width="1" height="4" fill="#c0c0c0"/>
<rect x="833" y="400" width="1" height="1" fill="#c0c0c0"/>
<rect x="837" y="400" width="1" height="2" fill="#c0c0c0"/>
<rect x="841" y="400" width="1" height="9" fill="#c0c0c0"/>
<rect x="845" y="400" width="1" height="10" fill="#c0c0c0"/>
<rect x="849" y="400" width="1" height="7" fill="#c0c0c0"/>
<rect x="853" y="400" width="1" height="13" fill="#c0c0c0"/>
<rect x="857" y="400" width="1" height="17" fill="#c0c0c0"/>
<rect x="861" y="400" width="1" height="19" fill="#c0c0c0"/>
<rect x="865" y="400" width="1" height="18" fill="#c0c0c0"/>
<rect x="869" y="400" width="1" height="15" fill="#c0c0c0"/>
<rect x="873" y="400" width="1" height="14" fill="#c0c0c0"/>
<rect x="877" y="400" width="1" height="8" fill="#c0c0c0"/>
<rect x="881" y="400" width="1" height="4" fill="#c0c0c0"/>
<rect x="885" y="400" width="1" height="1" fill="#c0c0c0"/>
<rect x="889" y="398" width="1" height="2" fill="#c0c0c0"/>
<rect x="893" y="400" width="1" height="5" fill="#c0c0c0"/>
<rect x="897" y="400" width="1" height="7" fill="#c0c0c0"/>
<rect x="901" y="400" width="1" height="10" fill="#c0c0c0"/>
<rect x="905" y="400" width="1" height="14" fill="#c0c0c0"/>
<rect x="909" y="400" width="1" height="17" fill="#c0c0c0"/>
<rect x="913" y="400" width="1" height="18" fill="#c0c0c0"/>
<rect x="917" y="400" width="1" height="16" fill="#c0c0c0"/>
<rect x="921" y="400" width="1" height="11" fill="#c0c0c0"/>
<rect x="925" y="400" width="1" height="10" fill="#c0c0c0"/>
<rect x="929" y="400" width="1" height="4" fill="#c0c0c0"/>
<rect x="933" y="400" width="1" height="1" fill="#c0c0c0"/>
<rect x="937" y="399" width="1" height="1" fill="#c0c0c0"/>
<rect x="941" y="400" width="1" height="1" fill="#c0c0c0"/>
<rect x="945" y="400" width="1" height="7" fill="#c0c0c0"/>
<rect x="949" y="400" width="1" height="6" fill="#c0c0c0"/>
<rect x="953" y="400" width="1" height="10" fill="#c0c0c0"/>
<rect x="957" y="400" width="1" height="14" fill="#c0c0c0"/>
<rect x="961" y="400" width="1" height="17" fill="#c0c0c0"/>
<rect x="965" y="400" width="1" height="22" fill="#c0c0c0"/>
<rect x="969" y="400" width="1" height="28" fill="#c0c0c0"/>
<rect x="973" y="400" width="1" height="28" fill="#c0c0c0"/>
<rect x="977" y="400" width="1" height="26" fill="#c0c0c0"/>
<rect x="981" y="400" width="1" height="25" fill="#c0c0c0"/>
<rect x="985" y="400" width="1" height="24" fill="#c0c0c0"/>
<rect x="989" y="400" width="1" height="23" fill="#c0c0c0"/>
<rect x="993" y="400" width="1" height="20" fill="#c0c0c0"/>
<rect x="997" y="400" width="1" height="19" fill="#c0c0c0"/>
<rect x="1001" y="400" width="1" height="20" fill="#c0c0c0"/>
<rect x="1005" y="400" width="1" height="23" fill="#c0c0c0"/>
<rect x="1009" y="400" width="1" height="22" fill="#c0c0c0"/>
<rect x="1013" y="400" width="1" height="24" fill="#c0c0c0"/>
<rect x="1017" y="400" width="1" height="21" fill="#c0c0c0"/>
<rect x="1021" y="400" width="1" height="15" fill="#c0c0c0"/>
<rect x="1025" y="400" width="1" height="9" fill="#c0c0c0"/>
<rect x="1029" y="400" width="1" height="3" fill="#c0c0c0"/>
<rect x="1033" y="400" width="1" height="3" fill="#c0c0c0"/>
<rect x="1037" y="400" width="1" height="1" fill="#c0c0c0"/>
</g>
<g clip-path="url(#cmacd)"><polyline points="5.5,373.9 9.5,374.8 13.5,376.3 17.5,378.1 21.5,380.3 25.5,382.9 29.5,385.7 33.5,388.4 37.5,390.9 41.5,392.9 45.5,394.4 49.5,395.3 53.5,395.9 57.5,395.9 61.5,395.5 65.5,394.8 69.5,394.2 73.5,393.8 77.5,393.7 81.5,393.7 85.5,394.0 89.5,394.6 93.5,395.5 97.5,397.3 101.5,399.5 105.5,401.8 109.5,404.0 113.5,405.8 117.5,407.4 121.5,408.6 125.5,409.3 129.5,409.7 133.5,408.6 137.5,406.5 141.5,403.8 145.5,401.0 149.5,398.4 153.5,395.9 157.5,393.8 161.5,391.8 165.5,389.6 169.5,387.6 173.5,385.8 177.5,384.5 181.5,383.2 185.5,382.0 189.5,380.5 193.5,379.0 197.5,377.3 201.5,376.3 205.5,375.9 209.5,376.2 213.5,377.1 217.5,377.9 221.5,379.1 225.5,380.6 229.5,382.8 233.5,385.2 237.5,387.6 241.5,389.9 245.5,392.0 249.5,393.8 253.5,395.8 257.5,397.6 261.5,399.2 265.5,400.1 269.5,401.3 273.5,402.6 277.5,404.4 281.5,406.3 285.5,408.4 289.5,411.0 293.5,414.2 297.5,417.9 301.5,422.3 305.5,426.5 309.5,430.8 313.5,434.5 317.5,437.9 321.5,440.8 325.5,442.8 329.5,444.1 333.5,444.6 337.5,444.2 341.5,443.1 345.5,441.4 349.5,439.4 353.5,437.3 357.5,435.3 361.5,433.4 365.5,431.4 369.5,429.5 373.5,427.8 377.5,426.3 381.5,425.0 385.5,423.3 389.5,421.4 393.5,419.1 397.5,416.8 401.5,414.4 405.5,412.0 409.5,409.7 413.5,407.2 417.5,404.6 421.5,402.3 425.5,400.3 429.5,398.6 433.5,397.0 437.5,395.6 441.5,394.4 445.5,393.3 449.5,392.4 453.5,391.8 457.5,391.6 461.5,391.4 465.5,391.1 469.5,391.8 473.5,393.2 477.5,395.1 481.5,396.9 485.5,398.7 489.5,400.5 493.5,402.1 497.5,403.8 501.5,405.5 505.5,406.3 509.5,406.1 513.5,405.1 517.5,403.9 521.5,402.7 525.5,401.5 529.5,400.2 533.5,399.0 537.5,397.9 541.5,396.8 545.5,396.3 549.5,396.4 553.5,397.1 557.5,397.9 561.5,398.6 565.5,399.4 569.5,399.7 573.5,399.9 577.5,400.1 581.5,399.9 585.5,399.4 589.5,398.7 593.5,397.9 597.5,397.4 601.5,396.9 605.5,397.5 609.5,398.9 613.5,400.6 617.5,402.8 621.5,405.1 625.5,407.4 629.5,409.5 633.5,411.8 637.5,414.5 641.5,416.8 645.5,418.9 649.5,420.6 653.5,422.2 657.5,423.6 661.5,424.9 665.5,426.1 669.5,427.0 673.5,427.6 677.5,427.4 681.5,426.5 685.5,425.2 689.5,423.4 693.5,421.3 697.5,418.9 701.5,416.2 705.5,413.6 709.5,410.7 713.5,408.0 717.5,405.6 721.5,403.7 725.5,402.0 729.5,400.6 733.5,399.7 737.5,398.8 741.5,397.9 745.5,396.7 749.5,395.4 753.5,394.1 757.5,392.4 761.5,390.7 765.5,389.0 769.5,387.5 773.5,386.8 777.5,386.3 781.5,386.6 785.5,387.6 789.5,388.8 793.5,390.7 797.5,393.0 801.5,395.3 805.5,397.5 809.5,399.4 813.5,401.1 817.5,402.3 821.5,403.4 825.5,404.2 829.5,404.5 833.5,404.3 837.5,404.2 841.5,404.7 845.5,405.2 849.5,405.4 853.5,406.3 857.5,407.4 861.5,408.9 865.5,410.5 869.5,412.1 873.5,413.4 877.5,413.2 881.5,412.7 885.5,412.0 889.5,410.4 893.5,409.1 897.5,407.7 901.5,406.9 905.5,406.7 909.5,407.1 913.5,408.3 917.5,409.6 921.5,410.7 925.5,412.0 929.5,411.9 933.5,411.3 937.5,410.1 941.5,408.5 945.5,407.4 949.5,406.1 953.5,405.4 957.5,405.7 961.5,406.4 965.5,408.5 969.5,411.5 973.5,414.7 977.5,417.5 981.5,419.5 985.5,421.5 989.5,422.9 993.5,423.6 997.5,423.7 1001.5,423.5 1005.5,422.9 1009.5,422.3 1013.5,422.0 1017.5,421.6 1021.5,420.6 1025.5,419.1 1029.5,417.2 1033.5,415.5 1037.5,413.4" fill="none" stroke="#ff0000" stroke-width="1" stroke-dasharray="3,3" shape-rendering="crispEdges"/></g>
<text x="10.00" y="468.00" font-size="9.72" textLength="67.31" lengthAdjust="spacingAndGlyphs" text-rendering="geometricPrecision" fill="#000" stroke="#000" stroke-width="0.25">RSI(14) 51.3897</text>
<g shape-rendering="crispEdges"><line x1="6" y1="485.5" x2="1305" y2="485.5" stroke="#c0c0c0" stroke-dasharray="3,3"/><line x1="6" y1="523.5" x2="1305" y2="523.5" stroke="#c0c0c0" stroke-dasharray="3,3"/></g>
<g clip-path="url(#crsi)"><polyline points="5.5,502.6 9.5,502.4 13.5,509.5 17.5,506.4 21.5,510.6 25.5,517.3 29.5,511.2 33.5,500.6 37.5,497.1 41.5,499.1 45.5,499.1 49.5,498.1 53.5,499.9 57.5,496.2 61.5,503.3 65.5,499.2 69.5,501.8 73.5,500.6 77.5,504.1 81.5,502.4 85.5,505.5 89.5,511.6 93.5,510.2 97.5,525.0 101.5,516.0 105.5,510.7 109.5,508.2 113.5,502.3 117.5,504.8 121.5,502.6 125.5,502.3 129.5,503.2 133.5,494.7 137.5,492.4 141.5,490.6 145.5,497.0 149.5,495.6 153.5,501.3 157.5,499.7 161.5,499.5 165.5,492.2 169.5,490.3 173.5,491.3 177.5,492.7 181.5,491.3 185.5,489.9 189.5,491.6 193.5,488.3 197.5,492.2 201.5,497.9 205.5,499.5 209.5,505.1 213.5,506.3 217.5,495.1 221.5,503.9 225.5,503.0 229.5,510.6 233.5,505.1 237.5,508.2 241.5,504.7 245.5,508.1 249.5,505.6 253.5,506.7 257.5,504.9 261.5,506.3 265.5,500.8 269.5,513.8 273.5,511.6 277.5,516.5 281.5,515.9 285.5,515.0 289.5,520.2 293.5,521.9 297.5,524.1 301.5,524.7 305.5,526.1 309.5,525.3 313.5,524.5 317.5,522.4 321.5,521.1 325.5,516.5 329.5,517.5 333.5,518.7 337.5,512.3 341.5,513.4 345.5,512.2 349.5,515.1 353.5,516.5 357.5,517.1 361.5,514.5 365.5,511.0 369.5,512.5 373.5,513.6 377.5,514.3 381.5,512.5 385.5,500.4 389.5,499.6 393.5,498.8 397.5,499.8 401.5,495.2 405.5,501.5 409.5,503.9 413.5,495.8 417.5,495.4 421.5,494.7 425.5,498.0 429.5,497.2 433.5,493.1 437.5,495.5 441.5,497.9 445.5,499.7 449.5,496.3 453.5,500.0 457.5,501.8 461.5,497.7 465.5,492.8 469.5,518.4 473.5,519.3 477.5,518.4 481.5,506.4 485.5,507.3 489.5,507.3 493.5,505.8 497.5,507.9 501.5,504.7 505.5,503.5 509.5,495.9 513.5,497.2 517.5,495.0 521.5,503.1 525.5,502.4 529.5,498.9 533.5,504.3 537.5,501.5 541.5,499.4 545.5,507.4 549.5,509.0 553.5,513.5 557.5,508.8 561.5,503.5 565.5,502.8 569.5,497.8 573.5,497.2 577.5,502.5 581.5,497.0 585.5,502.0 589.5,503.7 593.5,506.9 597.5,504.8 601.5,502.0 605.5,519.2 609.5,515.4 613.5,512.0 617.5,513.1 621.5,513.3 625.5,509.4 629.5,512.5 633.5,513.9 637.5,519.0 641.5,521.7 645.5,518.0 649.5,513.8 653.5,516.0 657.5,514.6 661.5,512.7 665.5,514.7 669.5,513.9 673.5,517.9 677.5,507.7 681.5,503.3 685.5,501.6 689.5,502.5 693.5,500.4 697.5,497.5 701.5,501.1 705.5,504.2 709.5,502.2 713.5,499.3 717.5,500.5 721.5,505.2 725.5,500.8 729.5,500.8 733.5,501.6 737.5,499.0 741.5,497.2 745.5,491.5 749.5,489.1 753.5,493.9 757.5,490.3 761.5,491.2 765.5,492.2 769.5,501.7 773.5,510.2 777.5,503.9 781.5,509.3 785.5,508.6 789.5,505.8 793.5,512.3 797.5,507.8 801.5,506.5 805.5,507.1 809.5,509.9 813.5,507.2 817.5,505.0 821.5,510.2 825.5,504.8 829.5,500.9 833.5,498.8 837.5,506.4 841.5,518.5 845.5,508.5 849.5,502.7 853.5,513.3 857.5,513.6 861.5,512.4 865.5,506.5 869.5,504.9 873.5,505.3 877.5,497.9 881.5,500.9 885.5,500.0 889.5,499.0 893.5,513.0 897.5,507.7 901.5,510.3 905.5,512.2 909.5,512.0 913.5,510.9 917.5,505.5 921.5,500.4 925.5,505.4 929.5,497.2 933.5,501.4 937.5,501.2 941.5,505.1 945.5,513.2 949.5,504.4 953.5,509.2 957.5,510.8 961.5,511.2 965.5,513.7 969.5,515.6 973.5,509.4 977.5,506.8 981.5,508.5 985.5,507.6 989.5,508.9 993.5,504.6 997.5,507.0 1001.5,510.2 1005.5,512.9 1009.5,507.9 1013.5,511.7 1017.5,505.9 1021.5,499.6 1025.5,500.2 1029.5,497.5 1033.5,504.3 1037.5,502.7" fill="none" stroke="#1e90ff" stroke-width="1" shape-rendering="crispEdges"/></g>
<g shape-rendering="crispEdges">
<path d="M8 51 H60 V75 H8 Z" fill="#c00000"/><rect x="9" y="52" width="50" height="23" fill="url(#gtab)"/>
<path d="M175 51 H227 V75 H175 Z" fill="#c00000"/><rect x="176" y="52" width="50" height="23" fill="url(#gtab)"/>
<rect x="8" y="75" width="109" height="40" fill="#b80000"/><rect x="9" y="76" width="107" height="38" fill="url(#gbig)"/>
<rect x="119" y="75" width="108" height="40" fill="#b80000"/><rect x="120" y="76" width="106" height="38" fill="url(#gbig)"/>
<rect x="9" y="75" width="50" height="1" fill="#e84040"/><rect x="176" y="75" width="50" height="1" fill="#e84040"/>
<rect x="12" y="74" width="44" height="1" fill="#8a0000"/><rect x="12" y="75" width="44" height="1" fill="#f88080"/>
<rect x="179" y="74" width="45" height="1" fill="#8a0000"/><rect x="179" y="75" width="45" height="1" fill="#f88080"/>
<rect x="60" y="51" width="115" height="24" fill="#ffffff"/>
<rect x="60" y="74" width="115" height="1" fill="#ffffff"/>
<rect x="62" y="51" width="111" height="1" fill="#a8a8a8"/><rect x="62" y="72" width="111" height="1" fill="#a8a8a8"/><rect x="62" y="51" width="1" height="22" fill="#a8a8a8"/><rect x="172" y="51" width="1" height="22" fill="#a8a8a8"/>
<rect x="63" y="52" width="20" height="20" fill="url(#gbtn)"/><rect x="83" y="52" width="1" height="20" fill="#b8b8b8"/>
<rect x="152" y="52" width="20" height="20" fill="url(#gbtn)"/><rect x="151" y="52" width="1" height="20" fill="#b8b8b8"/>
</g>
<path d="M70 61 L76 61 L73 64 Z" fill="#5868c8"/><path d="M158.5 64 L164.5 64 L161.5 61 Z" fill="#5868c8"/>
<text x="124.00" y="66.00" font-size="12.50" textLength="24.34" lengthAdjust="spacingAndGlyphs" text-rendering="geometricPrecision" fill="#000" stroke="#000" stroke-width="0.25">0.01</text>
<text x="20.00" y="67.00" font-size="12.50" textLength="25.66" lengthAdjust="spacingAndGlyphs" text-rendering="geometricPrecision" fill="#fff">SELL</text>
<text x="188.04" y="67.00" font-size="12.50" textLength="24.63" lengthAdjust="spacingAndGlyphs" text-rendering="geometricPrecision" fill="#fff">BUY</text>
<text x="28.00" y="106.00" font-size="12.50" textLength="24.34" lengthAdjust="spacingAndGlyphs" text-rendering="geometricPrecision" fill="#fff" font-weight="bold">0.98</text>
<text x="55.06" y="106.00" font-size="34.29" textLength="36.02" lengthAdjust="spacingAndGlyphs" text-rendering="geometricPrecision" fill="#fff" stroke="url(#gbigu)" stroke-width="0.4">70</text>
<text x="95.00" y="90.00" font-size="12.50" textLength="6.95" lengthAdjust="spacingAndGlyphs" text-rendering="geometricPrecision" fill="#fff" font-weight="bold">6</text>
<text x="138.00" y="106.00" font-size="12.50" textLength="24.34" lengthAdjust="spacingAndGlyphs" text-rendering="geometricPrecision" fill="#fff" font-weight="bold">0.98</text>
<text x="166.06" y="106.00" font-size="34.29" textLength="36.02" lengthAdjust="spacingAndGlyphs" text-rendering="geometricPrecision" fill="#fff" stroke="url(#gbigu)" stroke-width="0.4">73</text>
<text x="206.00" y="90.00" font-size="12.50" textLength="6.95" lengthAdjust="spacingAndGlyphs" text-rendering="geometricPrecision" fill="#fff" font-weight="bold">8</text>
<g shape-rendering="crispEdges">
<rect x="0" y="573" width="1351" height="29" fill="#f0f0f0"/>
<rect x="0" y="574" width="1351" height="1" fill="#e4e4e4"/>
<rect x="0" y="575" width="1351" height="1" fill="#000"/>
<rect x="0" y="576" width="1" height="18" fill="#a0a0a0"/><rect x="1" y="576" width="1" height="18" fill="#696969"/>
<rect x="0" y="594" width="1351" height="2" fill="#f8f8f8"/>
<rect x="0" y="596" width="1351" height="3" fill="#f0f0f0"/><rect x="0" y="599" width="1349" height="1" fill="#a0a0a0"/><rect x="0" y="600" width="1351" height="2" fill="#f8f8f8"/>
<rect x="202" y="575" width="88" height="19" fill="#000"/><rect x="203" y="575" width="86" height="18" fill="#fff"/>
<rect x="98" y="578" width="1" height="14" fill="#7a7a7a"/>
<rect x="394" y="578" width="1" height="14" fill="#7a7a7a"/>
<rect x="487" y="578" width="1" height="14" fill="#7a7a7a"/>
<rect x="571" y="578" width="1" height="14" fill="#7a7a7a"/>
<rect x="674" y="578" width="1" height="14" fill="#7a7a7a"/>
<rect x="778" y="578" width="1" height="14" fill="#7a7a7a"/>
<rect x="855" y="578" width="1" height="14" fill="#7a7a7a"/>
</g>
<text x="17.04" y="590.00" font-size="12.50" textLength="69.20" lengthAdjust="spacingAndGlyphs" text-rendering="geometricPrecision" fill="#6a6a6a">EURUSD,H4</text>
<text x="109.00" y="590.00" font-size="12.50" textLength="82.05" lengthAdjust="spacingAndGlyphs" text-rendering="geometricPrecision" fill="#6a6a6a">AUDUSD,Daily</text>
<text x="211.03" y="590.00" font-size="12.50" textLength="68.12" lengthAdjust="spacingAndGlyphs" text-rendering="geometricPrecision" fill="#000">USDCHF,H4</text>
<text x="300.01" y="590.00" font-size="12.50" textLength="83.03" lengthAdjust="spacingAndGlyphs" text-rendering="geometricPrecision" fill="#6a6a6a">USDCAD,Daily</text>
<text x="403.00" y="590.00" font-size="12.50" textLength="72.94" lengthAdjust="spacingAndGlyphs" text-rendering="geometricPrecision" fill="#6a6a6a">USDCNH,H4</text>
<text x="496.05" y="590.00" font-size="12.50" textLength="64.12" lengthAdjust="spacingAndGlyphs" text-rendering="geometricPrecision" fill="#6a6a6a">USDJPY,H4</text>
<text x="581.00" y="590.00" font-size="12.50" textLength="82.36" lengthAdjust="spacingAndGlyphs" text-rendering="geometricPrecision" fill="#6a6a6a">XAUUSD,Daily</text>
<text x="686.00" y="590.00" font-size="12.50" textLength="80.04" lengthAdjust="spacingAndGlyphs" text-rendering="geometricPrecision" fill="#6a6a6a">GBPUSD,Daily</text>
<text x="789.00" y="590.00" font-size="12.50" textLength="53.99" lengthAdjust="spacingAndGlyphs" text-rendering="geometricPrecision" fill="#6a6a6a">SP500,H1</text>
<path d="M1324 581 L1324 587 L1321 584 Z" fill="#909090"/><path d="M1340 581 L1340 587 L1343 584 Z" fill="#909090"/>
</svg></body></html>
